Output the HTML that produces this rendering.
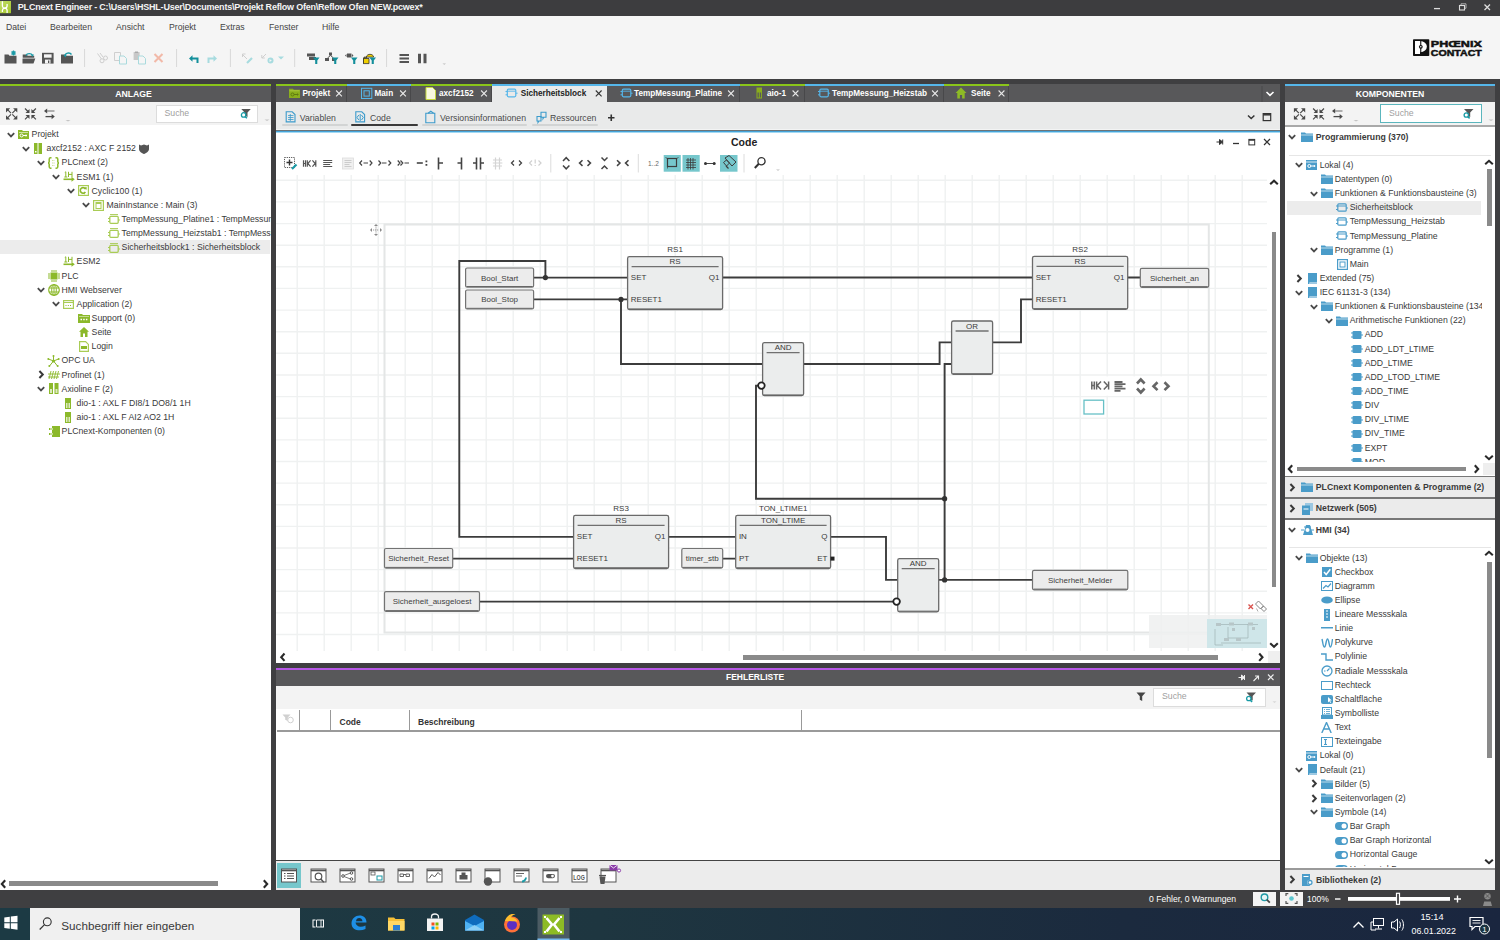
<!DOCTYPE html>
<html><head><meta charset="utf-8">
<style>
*{box-sizing:border-box}
html,body{margin:0;padding:0}
body{width:1500px;height:940px;overflow:hidden;position:relative;background:#3f3f41;font-family:"Liberation Sans",sans-serif;color:#333}
.a{position:absolute}
.t{position:absolute;white-space:nowrap;line-height:1}
#title{left:0;top:0;width:1500px;height:16px;background:#3d3d3f}
#menu{left:0;top:16px;width:1500px;height:22px;background:#f5f5f5}
#tb{left:0;top:38px;width:1500px;height:41px;background:#f5f5f5}
#lp{left:0;top:84px;width:271px;height:806px;background:#fff}
#rp{left:1285px;top:84px;width:210px;height:806px;background:#fff}
#mid{left:276px;top:84px;width:1004px;height:806px;background:#fff}
.ph{position:absolute;left:0;top:0;width:100%;height:18px;background:#58585a;border-top:2px solid #8ac51a}
.ph span{position:absolute;left:0;right:0;top:3.5px;text-align:center;color:#fff;font-weight:bold;font-size:8.7px;line-height:1}
.ptb{position:absolute;left:0;top:18px;width:100%;height:23px;background:#f3f3f3}
.search{position:absolute;background:#fff;border:1px solid #dcdcdc}
.search span{position:absolute;left:8px;top:3.3px;font-size:8.7px;color:#a0a0a0;line-height:1;white-space:nowrap}
.tab{position:absolute;top:84px;height:18px;background:#58585a;border-top:2px solid #8ac51a;border-right:1px solid #4b4b4d}
.tab span{position:absolute;top:3px;font-size:8.3px;font-weight:bold;color:#fff;white-space:nowrap;line-height:1}
.tab i{position:absolute;top:2px;font-style:normal;font-size:9px;color:#fff;line-height:1}
.tab .ic{position:absolute}
.tab.act{background:#e9eaea}
.tab.act span{color:#222}
.tab.act i{color:#333}
.sub{position:absolute;top:105px;height:21px;border-bottom:2px solid #d4d6d6}
.sub.on{border-bottom-color:#333}
.sub span{position:absolute;top:7px;font-size:8.7px;color:#333;white-space:nowrap;line-height:1}
.tree .t{font-size:8.7px;color:#333}

</style></head><body>

<!-- TITLE BAR -->
<div id="title" class="a">
  
  <div class="t" style="left:17.8px;top:3px;font-size:9px;font-weight:bold;color:#f4f4f4;letter-spacing:-0.21px">PLCnext Engineer - C:\Users\HSHL-User\Documents\Projekt Reflow Ofen\Reflow Ofen NEW.pcwex*</div>
</div>

<!-- MENU -->
<div id="menu" class="a">
  <div class="t" style="left:6px;top:7px;font-size:8.7px;color:#444">Datei</div>
  <div class="t" style="left:50px;top:7px;font-size:8.7px;color:#444">Bearbeiten</div>
  <div class="t" style="left:116px;top:7px;font-size:8.7px;color:#444">Ansicht</div>
  <div class="t" style="left:169px;top:7px;font-size:8.7px;color:#444">Projekt</div>
  <div class="t" style="left:220px;top:7px;font-size:8.7px;color:#444">Extras</div>
  <div class="t" style="left:269px;top:7px;font-size:8.7px;color:#444">Fenster</div>
  <div class="t" style="left:322px;top:7px;font-size:8.7px;color:#444">Hilfe</div>
</div>
<div class="a" style="left:0;top:38px;width:448px;height:1px;background:#e2e2e2"></div>

<!-- TOOLBAR -->
<div id="tb" class="a"></div>
<!-- window controls -->
<svg class="a" style="left:1425px;top:0" width="75" height="16" viewBox="1425 0 75 16">
  <path d="M1434 8.6h6" stroke="#ddd" stroke-width="1.3"/>
  <rect x="1459.5" y="5.5" width="5" height="4.5" fill="none" stroke="#ddd" stroke-width="1.1"/>
  <path d="M1461 5V3.8h5v4.5h-1.3" fill="none" stroke="#bbb" stroke-width="0.9"/>
  <path d="M1484.5 4.5l5.5 5.5M1490 4.5l-5.5 5.5" stroke="#ddd" stroke-width="1.3"/>
</svg>
<!-- title logo -->
<svg class="a" style="left:0;top:0" width="12" height="16" viewBox="0 0 12 16">
  <defs><linearGradient id="lg1" x1="0" y1="0" x2="1" y2="1"><stop offset="0" stop-color="#c2dc6a"/><stop offset="1" stop-color="#a3c62a"/></linearGradient></defs>
  <rect x="0" y="1" width="11" height="12.2" fill="url(#lg1)"/>
  <path d="M2.4 1.2V6.2Q2.6 8 4.7 8.1Q7 8 7.1 6V4" stroke="#fff" stroke-width="1.3" fill="none"/>
  <path d="M2.4 12V10.2Q2.6 8.3 4.7 8.1Q7 8.2 7.1 10.3V13" stroke="#fff" stroke-width="1.3" fill="none"/>
</svg>
<!-- phoenix logo -->
<svg class="a" style="left:1410px;top:36px" width="80" height="24" viewBox="1410 36 80 24">
  <rect x="1413" y="39.3" width="16.3" height="16.7" rx="0.8" fill="#111"/>
  <path d="M1415 41h5.3a6.6 5.6 0 0 1 0 11.2h-0.3v1.8h-5z" fill="#fff"/>
  <rect x="1420.2" y="41" width="1.1" height="13" fill="#111"/>
  <circle cx="1420.8" cy="46.8" r="1.9" fill="#111"/><circle cx="1420.8" cy="46.8" r="0.8" fill="#fff"/>
  <text x="1430.8" y="46.6" font-family="Liberation Sans" font-weight="bold" font-size="9.6" fill="#111" stroke="#111" stroke-width="0.5" textLength="51" lengthAdjust="spacingAndGlyphs">PH&#x152;NIX</text>
  <text x="1430.8" y="56" font-family="Liberation Sans" font-weight="bold" font-size="9.6" fill="#111" stroke="#111" stroke-width="0.5" textLength="51" lengthAdjust="spacingAndGlyphs">CONTACT</text>
</svg>
<!-- main toolbar icons -->
<svg class="a" style="left:0;top:38px" width="460" height="41" viewBox="0 38 460 41">
  <g fill="#555">
    <path d="M4.5 54.5h4l1 1.3h7V63.6h-12z"/>
    <path d="M22.7 54.5h4l1 1.3h6.5v2h-11.5zM22.5 58.5h12.8l-1.8 5.1H22.5z"/>
    <path d="M42 52.8h11.6v10.8H42z"/>
    <path d="M61 54.5h4l1 1.3h7V63.6h-12z"/>
  </g>
  <path d="M44 54.3h7.6v3.4H44z" fill="#f5f5f5"/><path d="M45 59.6h5.5v4h-5.5z" fill="#f5f5f5"/><rect x="48" y="60.5" width="1.3" height="2.5" fill="#555"/>
  <path d="M13.5 50.5v5M11 53h5M11.7 51.2l3.6 3.6M15.3 51.2l-3.6 3.6" stroke="#1a9aa6" stroke-width="1.1"/>
  <path d="M26 55.5a3.5 3 0 0 1 6.5 0" stroke="#1a9aa6" stroke-width="1.4" fill="none"/><path d="M31 54.5h3l-1.5 2.2z" fill="#1a9aa6"/>
  <path d="M65 56a3.5 3 0 0 1 6.5-1.5" stroke="#1a9aa6" stroke-width="1.4" fill="none"/><path d="M63.5 55h3l-1 2.5z" fill="#1a9aa6"/>
  <path d="M84.6 49v18M176.6 49v18M230.4 49v18M294.7 49v18M386.6 49v18" stroke="#d8d8d8" stroke-width="1"/>
  <g stroke="#cfcfcf" stroke-width="1" fill="none">
    <circle cx="102" cy="60.8" r="2"/><circle cx="105.5" cy="58" r="2"/><path d="M97.5 53.5l4 5.5M100 53l3 4"/>
  </g>
  <path d="M114.5 52.5h6v8h-6z" fill="none" stroke="#cfcfcf" stroke-width="1"/>
  <path d="M119.5 56h4.5l2.5 2.5v5.5h-7z" fill="#f5f5f5" stroke="#a9dadd" stroke-width="1"/>
  <path d="M133.6 52h6v8h-6z" fill="#c8c8c8"/><path d="M135 51.5h3v1.5h-3z" fill="#aaa"/>
  <path d="M138.5 56h4.5l2.5 2.5v5.5h-7z" fill="#f5f5f5" stroke="#a9dadd" stroke-width="1"/>
  <path d="M154.5 54l8 8M162.5 54l-8 8" stroke="#f2b9a8" stroke-width="2"/>
  <path d="M197.5 63V58.5H191.5" stroke="#138f9b" stroke-width="2" fill="none"/><path d="M189 58.5l3.5-3.3v6.6z" fill="#138f9b"/>
  <path d="M208.5 63V58.5H214.5" stroke="#a7dbdf" stroke-width="2" fill="none"/><path d="M217 58.5l-3.5-3.3v6.6z" fill="#a7dbdf"/>
  <path d="M242 54l5 5M242.5 57v-3h3" stroke="#cfcfcf" stroke-width="1" fill="none"/><path d="M247 63l5-5" stroke="#a7dbdf" stroke-width="2.2"/>
  <path d="M266 54l-4 4M261.8 55v3h3" stroke="#cfcfcf" stroke-width="1" fill="none"/><circle cx="270.5" cy="60.5" r="3" fill="#a7dbdf"/><path d="M269.5 59v3l2.3-1.5z" fill="#f5f5f5"/>
  <path d="M278 56.5h6l-3 3z" fill="#a7dbdf"/>
  <g fill="#555">
    <path d="M307 53.5h8v3h-8zM309 57h7v3h-7z"/>
    <path d="M329 52.5h3v3h-3zM325 58h4v3h-4zM332 58h3v3h-3z"/><path d="M330.5 55.5l-3 2.5M330.5 55.5l3 2.5" stroke="#555" stroke-width="1"/>
    <path d="M347 53.5h4.5v4h-4.5z"/><path d="M345 55.5l1.5-1.5v3zM353.5 55.5l-1.5-1.5v3z"/>
  </g>
  <path d="M313 57.5h6.5l-2.2 3v3.5h-2.1v-3.5z" fill="#138f9b"/>
  <path d="M332 57.5h6.5l-2.2 3v3.5h-2.1v-3.5z" fill="#138f9b"/>
  <path d="M351 57.5h6.5l-2.2 3v3.5h-2.1v-3.5z" fill="#138f9b"/>
  <path d="M363.5 63.6v-5.5h3v-2a4 3.5 0 0 1 7 0v1H364z" fill="#f0d000" stroke="#333" stroke-width="0.8"/><path d="M363.5 58.5h5.5v5.1h-5.5z" fill="#f0d000" stroke="#333" stroke-width="0.8"/>
  <path d="M369.5 57.5h6.5l-2.2 3v3.5h-2.1v-3.5z" fill="#138f9b"/>
  <path d="M399.5 54h9.5v2h-9.5zM399.5 57.5h9.5v2h-9.5zM399.5 61h9.5v2h-9.5z" fill="#555"/>
  <path d="M418 53.8h3v9.5h-3zM423.5 53.8h3v9.5h-3z" fill="#555"/>
  <path d="M442.5 63.5h3.5l-1.75 1.3z" fill="#bbb"/>
</svg>


<!-- LEFT PANEL -->
<div id="lp" class="a">
  <div class="ph"><span style="right:4px">ANLAGE</span></div>
  <div class="ptb">
    <div class="search" style="left:155.5px;top:2.6px;width:102px;height:18.5px"><span>Suche</span></div>
  </div>
</div>
<div class="a" style="left:0;top:126px;width:271px;height:750px;overflow:hidden">
<div class="a" style="left:0;top:114.3px;width:270px;height:14px;background:#ececec"></div>
<svg class="a" style="left:7.1px;top:5.5px;" width="8" height="6" viewBox="0 0 8 6"><path d="M0.8 1.2L4 4.4L7.2 1.2" stroke="#4a4a4a" stroke-width="1.8" fill="none"/></svg>
<svg class="a" style="left:18.0px;top:3.3px;" width="11" height="10" viewBox="0 0 11 10"><path d="M0 1h4l1 1h6v8H0z" fill="#8cb92b"/><rect x="1" y="3" width="9" height="0.8" fill="#fff" opacity=".7"/><circle cx="3.6" cy="6.5" r="1.5" fill="none" stroke="#fff" stroke-width="1"/><path d="M5 6.5h4M8 5.5v2" stroke="#fff" stroke-width="1"/></svg>
<div class="t" style="left:31.60px;top:4.16px;font-size:8.7px;color:#3a3a3a;">Projekt</div>
<svg class="a" style="left:22.1px;top:19.7px;" width="8" height="6" viewBox="0 0 8 6"><path d="M0.8 1.2L4 4.4L7.2 1.2" stroke="#4a4a4a" stroke-width="1.8" fill="none"/></svg>
<svg class="a" style="left:34.0px;top:17.0px;" width="8" height="11" viewBox="0 0 8 11"><rect x="0" y="0" width="8" height="11" fill="#8cb92b"/><rect x="3.5" y="0" width="1" height="11" fill="#fff"/><rect x="1" y="8" width="1.5" height="1.5" fill="#fff"/></svg>
<div class="t" style="left:46.60px;top:18.30px;font-size:8.7px;color:#3a3a3a;">axcf2152 : AXC F 2152</div>
<svg class="a" style="left:139.0px;top:17.5px;" width="10" height="10" viewBox="0 0 10 10"><path d="M0 0.5L2 1.5L5 0.5L8 1.5L10 0.5V5C10 7.5 7 9.5 5 10C3 9.5 0 7.5 0 5z" fill="#555"/></svg>
<svg class="a" style="left:37.1px;top:33.8px;" width="8" height="6" viewBox="0 0 8 6"><path d="M0.8 1.2L4 4.4L7.2 1.2" stroke="#4a4a4a" stroke-width="1.8" fill="none"/></svg>
<svg class="a" style="left:48.0px;top:31.1px;" width="11" height="12" viewBox="0 0 11 12"><path d="M3.5 0.8H2.5Q1.2 0.8 1.2 2.2V4.8L0.4 6L1.2 7.2V9.8Q1.2 11.2 2.5 11.2H3.5M7.5 0.8H8.5Q9.8 0.8 9.8 2.2V4.8L10.6 6L9.8 7.2V9.8Q9.8 11.2 8.5 11.2H7.5" stroke="#8cb92b" stroke-width="1.5" fill="none"/><path d="M4.3 3.5h2M4.3 6h2.4M4.3 8.5h2" stroke="#a9cc55" stroke-width="0.8" stroke-dasharray="0.8 0.6"/></svg>
<div class="t" style="left:61.60px;top:32.44px;font-size:8.7px;color:#3a3a3a;">PLCnext (2)</div>
<svg class="a" style="left:52.1px;top:48.0px;" width="8" height="6" viewBox="0 0 8 6"><path d="M0.8 1.2L4 4.4L7.2 1.2" stroke="#4a4a4a" stroke-width="1.8" fill="none"/></svg>
<svg class="a" style="left:63.0px;top:45.3px;" width="12" height="12" viewBox="0 0 12 12"><path d="M1.8 1.5L2.8 0.8V6M1.3 6h3M5.5 0.8V6M9 0.8V6M5.5 3.4H9" stroke="#8cb92b" stroke-width="1" fill="none"/><path d="M0.5 8.3h9" stroke="#8cb92b" stroke-width="1.6"/><path d="M8.5 5.8L11.8 8.3L8.5 10.8z" fill="#8cb92b"/></svg>
<div class="t" style="left:76.60px;top:46.58px;font-size:8.7px;color:#3a3a3a;">ESM1 (1)</div>
<svg class="a" style="left:67.1px;top:62.1px;" width="8" height="6" viewBox="0 0 8 6"><path d="M0.8 1.2L4 4.4L7.2 1.2" stroke="#4a4a4a" stroke-width="1.8" fill="none"/></svg>
<svg class="a" style="left:78.0px;top:59.4px;" width="11" height="11" viewBox="0 0 11 11"><rect x="0.6" y="0.6" width="9.8" height="9.8" fill="none" stroke="#a9cc55" stroke-width="1.2"/><path d="M7.6 4.2A2.8 2.8 0 1 0 7.4 7" stroke="#8cb92b" stroke-width="1.6" fill="none"/><path d="M6 2.2L8.8 2.3L8.4 5z" fill="#8cb92b"/><path d="M6.8 8.8L4.8 8.3" stroke="#8cb92b" stroke-width="1"/></svg>
<div class="t" style="left:91.60px;top:60.72px;font-size:8.7px;color:#3a3a3a;">Cyclic100 (1)</div>
<svg class="a" style="left:82.1px;top:76.3px;" width="8" height="6" viewBox="0 0 8 6"><path d="M0.8 1.2L4 4.4L7.2 1.2" stroke="#4a4a4a" stroke-width="1.8" fill="none"/></svg>
<svg class="a" style="left:93.0px;top:73.6px;" width="11" height="11" viewBox="0 0 11 11"><rect x="0.6" y="0.6" width="9.8" height="9.8" fill="none" stroke="#a9cc55" stroke-width="1.2"/><rect x="3" y="2.5" width="5" height="6" fill="none" stroke="#a9cc55" stroke-width="1"/><path d="M3 3.5h5" stroke="#a9cc55" stroke-width="1"/></svg>
<div class="t" style="left:106.60px;top:74.86px;font-size:8.7px;color:#3a3a3a;">MainInstance : Main (3)</div>
<svg class="a" style="left:108.0px;top:88.2px;" width="12" height="10" viewBox="0 0 12 10"><path d="M2 0.6h8" stroke="#a9cc55" stroke-width="1"/><rect x="1.8" y="2.3" width="8.4" height="7" rx="1" fill="none" stroke="#a9cc55" stroke-width="1.3"/><path d="M0 4.5h2M0 7.5h2M10 6h2" stroke="#a9cc55" stroke-width="1"/></svg>
<div class="t" style="left:121.60px;top:89.00px;font-size:8.7px;color:#3a3a3a;">TempMessung_Platine1 : TempMessung_Platine</div>
<svg class="a" style="left:108.0px;top:102.3px;" width="12" height="10" viewBox="0 0 12 10"><path d="M2 0.6h8" stroke="#a9cc55" stroke-width="1"/><rect x="1.8" y="2.3" width="8.4" height="7" rx="1" fill="none" stroke="#a9cc55" stroke-width="1.3"/><path d="M0 4.5h2M0 7.5h2M10 6h2" stroke="#a9cc55" stroke-width="1"/></svg>
<div class="t" style="left:121.60px;top:103.14px;font-size:8.7px;color:#3a3a3a;">TempMessung_Heizstab1 : TempMessung_Heizstab</div>
<svg class="a" style="left:108.0px;top:116.5px;" width="12" height="10" viewBox="0 0 12 10"><path d="M2 0.6h8" stroke="#a9cc55" stroke-width="1"/><rect x="1.8" y="2.3" width="8.4" height="7" rx="1" fill="none" stroke="#a9cc55" stroke-width="1.3"/><path d="M0 4.5h2M0 7.5h2M10 6h2" stroke="#a9cc55" stroke-width="1"/></svg>
<div class="t" style="left:121.60px;top:117.28px;font-size:8.7px;color:#3a3a3a;">Sicherheitsblock1 : Sicherheitsblock</div>
<svg class="a" style="left:63.0px;top:130.1px;" width="12" height="12" viewBox="0 0 12 12"><path d="M1.8 1.5L2.8 0.8V6M1.3 6h3M5.5 0.8V6M9 0.8V6M5.5 3.4H9" stroke="#8cb92b" stroke-width="1" fill="none"/><path d="M0.5 8.3h9" stroke="#8cb92b" stroke-width="1.6"/><path d="M8.5 5.8L11.8 8.3L8.5 10.8z" fill="#8cb92b"/></svg>
<div class="t" style="left:76.60px;top:131.42px;font-size:8.7px;color:#3a3a3a;">ESM2</div>
<svg class="a" style="left:47.5px;top:143.8px;" width="12" height="12" viewBox="0 0 12 12"><rect x="2.5" y="2.5" width="7" height="7" fill="#8cb92b"/><path d="M4 0v2M6 0v2M8 0v2M4 10v2M6 10v2M8 10v2M0 4h2M0 6h2M0 8h2M10 4h2M10 6h2M10 8h2" stroke="#8cb92b" stroke-width="1"/></svg>
<div class="t" style="left:61.60px;top:145.56px;font-size:8.7px;color:#3a3a3a;">PLC</div>
<svg class="a" style="left:37.1px;top:161.1px;" width="8" height="6" viewBox="0 0 8 6"><path d="M0.8 1.2L4 4.4L7.2 1.2" stroke="#4a4a4a" stroke-width="1.8" fill="none"/></svg>
<svg class="a" style="left:47.5px;top:157.9px;" width="12" height="12" viewBox="0 0 12 12"><circle cx="6" cy="6" r="5.3" fill="none" stroke="#8cb92b" stroke-width="1.2"/><ellipse cx="6" cy="6" rx="2.3" ry="5.3" fill="none" stroke="#8cb92b" stroke-width="1"/><path d="M0.8 4h10.4M0.8 8h10.4M6 0.7v10.6" stroke="#8cb92b" stroke-width="1"/></svg>
<div class="t" style="left:61.60px;top:159.70px;font-size:8.7px;color:#3a3a3a;">HMI Webserver</div>
<svg class="a" style="left:52.1px;top:175.2px;" width="8" height="6" viewBox="0 0 8 6"><path d="M0.8 1.2L4 4.4L7.2 1.2" stroke="#4a4a4a" stroke-width="1.8" fill="none"/></svg>
<svg class="a" style="left:63.0px;top:173.5px;" width="11" height="9" viewBox="0 0 11 9"><rect x="0.6" y="0.6" width="9.8" height="7.8" fill="none" stroke="#a9cc55" stroke-width="1.2"/><path d="M0.6 2.5h9.8" stroke="#a9cc55" stroke-width="1"/><path d="M2.5 5.5h1M4.8 5.5h1M7 5.5h1" stroke="#8cb92b" stroke-width="1.2"/></svg>
<div class="t" style="left:76.60px;top:173.84px;font-size:8.7px;color:#3a3a3a;">Application (2)</div>
<svg class="a" style="left:78.0px;top:187.7px;" width="12" height="9" viewBox="0 0 12 9"><path d="M0 0h4l1 1h7v8H0z" fill="#8cb92b"/><rect x="1" y="2" width="10" height="0.8" fill="#fff" opacity=".6"/><path d="M2.5 5.5h1.5M5.2 5.5h1.5M7.9 5.5h1.5" stroke="#fff" stroke-width="1.3"/></svg>
<div class="t" style="left:91.60px;top:187.98px;font-size:8.7px;color:#3a3a3a;">Support (0)</div>
<svg class="a" style="left:78.5px;top:201.3px;" width="10" height="10" viewBox="0 0 10 10"><path d="M5 0L0 4.8h1.5V10h2.5V6.5h2V10h2.5V4.8H10z" fill="#8cb92b"/></svg>
<div class="t" style="left:91.60px;top:202.12px;font-size:8.7px;color:#3a3a3a;">Seite</div>
<svg class="a" style="left:78.5px;top:215.0px;" width="10" height="11" viewBox="0 0 10 11"><path d="M0.6 0.6h6l2.8 2.8v7H0.6z" fill="none" stroke="#a9cc55" stroke-width="1.2"/><rect x="2" y="5" width="6" height="3" fill="#8cb92b"/></svg>
<div class="t" style="left:91.60px;top:216.26px;font-size:8.7px;color:#3a3a3a;">Login</div>
<svg class="a" style="left:47.0px;top:228.6px;" width="13" height="12" viewBox="0 0 13 12"><path d="M6.5 6L6.5 1M6.5 6L1.5 4M6.5 6L11.5 4M6.5 6L2.5 11M6.5 6L10.5 11" stroke="#8cb92b" stroke-width="1"/><circle cx="6.5" cy="6" r="1.6" fill="#8cb92b"/><circle cx="6.5" cy="1" r="1" fill="#8cb92b"/><circle cx="1.3" cy="4" r="1" fill="#8cb92b"/><circle cx="11.7" cy="4" r="1" fill="#8cb92b"/><circle cx="2.3" cy="11" r="1" fill="#8cb92b"/><circle cx="10.7" cy="11" r="1" fill="#8cb92b"/></svg>
<div class="t" style="left:61.60px;top:230.40px;font-size:8.7px;color:#3a3a3a;">OPC UA</div>
<svg class="a" style="left:38.1px;top:244.2px;" width="7" height="9" viewBox="0 0 7 9"><path d="M1.4 1L4.8 4.5L1.4 8" stroke="#3a3a3a" stroke-width="2" fill="none"/></svg>
<svg class="a" style="left:48.0px;top:243.7px;" width="12" height="10" viewBox="0 0 12 10"><path d="M1 9L3 1M3.5 9L5.5 1M6 9L8 1M8.5 9L10.5 1M0 4h12M0 7h11" stroke="#8cb92b" stroke-width="0.9"/></svg>
<div class="t" style="left:61.60px;top:244.54px;font-size:8.7px;color:#3a3a3a;">Profinet (1)</div>
<svg class="a" style="left:37.1px;top:260.1px;" width="8" height="6" viewBox="0 0 8 6"><path d="M0.8 1.2L4 4.4L7.2 1.2" stroke="#4a4a4a" stroke-width="1.8" fill="none"/></svg>
<svg class="a" style="left:48.5px;top:257.4px;" width="10" height="11" viewBox="0 0 10 11"><rect x="0" y="0" width="4" height="11" fill="#8cb92b"/><rect x="5.5" y="0" width="4" height="11" fill="#8cb92b"/><path d="M1 6h2v4H1zM6.5 6h2v4h-2z" fill="#fff" opacity=".7"/></svg>
<div class="t" style="left:61.60px;top:258.68px;font-size:8.7px;color:#3a3a3a;">Axioline F (2)</div>
<svg class="a" style="left:65.0px;top:271.5px;" width="6" height="11" viewBox="0 0 6 11"><rect x="0" y="0" width="6" height="11" fill="#8cb92b"/><path d="M1 5h1.5v5H1zM3.5 5H5v5H3.5z" fill="#fff" opacity=".7"/></svg>
<div class="t" style="left:76.60px;top:272.82px;font-size:8.7px;color:#3a3a3a;">dio-1 : AXL F DI8/1 DO8/1 1H</div>
<svg class="a" style="left:65.0px;top:285.6px;" width="6" height="11" viewBox="0 0 6 11"><rect x="0" y="0" width="6" height="11" fill="#8cb92b"/><path d="M1 5h1.5v5H1zM3.5 5H5v5H3.5z" fill="#fff" opacity=".7"/></svg>
<div class="t" style="left:76.60px;top:286.96px;font-size:8.7px;color:#3a3a3a;">aio-1 : AXL F AI2 AO2 1H</div>
<svg class="a" style="left:48.5px;top:299.8px;" width="11" height="11" viewBox="0 0 11 11"><path d="M3 0h8v11H3z" fill="#8cb92b"/><path d="M0 2h4v2H0zM0 7h4v2H0z" fill="#8cb92b"/><path d="M1 2.5h3v1H1zM1 7.5h3v1H1z" fill="#fff"/></svg>
<div class="t" style="left:61.60px;top:301.10px;font-size:8.7px;color:#3a3a3a;">PLCnext-Komponenten (0)</div>
</div>
<div class="a" style="left:9px;top:881px;width:209px;height:4.5px;background:#8a8a8a"></div>
<svg class="a" style="left:0.0px;top:878.5px;" width="7" height="10" viewBox="0 0 7 10"><path d="M5.2 1.2L1.8 5L5.2 8.8" stroke="#2a2a2a" stroke-width="2.1" fill="none"/></svg><svg class="a" style="left:261.5px;top:878.5px;" width="7" height="10" viewBox="0 0 7 10"><path d="M1.8 1.2L5.2 5L1.8 8.8" stroke="#2a2a2a" stroke-width="2.1" fill="none"/></svg>

<!-- MIDDLE -->
<div id="mid" class="a">
  <!-- tab bar -->
  <div class="a" style="left:0;top:0;width:1004px;height:18px;background:#58585a"></div>
</div>
<div class="a" style="left:276px;top:84px;width:71px;height:18px;background:#58585a;border-top:2px solid #8ac51a"></div>
<div class="t" style="left:302.40px;top:89.55px;font-size:8.2px;color:#fff;font-weight:bold;">Projekt</div>
<div class="a" style="left:347px;top:84px;width:64px;height:18px;background:#58585a;border-top:2px solid #55b6ea"></div>
<div class="t" style="left:374.50px;top:89.55px;font-size:8.2px;color:#fff;font-weight:bold;">Main</div>
<div class="a" style="left:411px;top:84px;width:81px;height:18px;background:#58585a;border-top:2px solid #8ac51a"></div>
<div class="t" style="left:439.00px;top:89.55px;font-size:8.2px;color:#fff;font-weight:bold;">axcf2152</div>
<div class="a" style="left:492px;top:84px;width:115px;height:18px;background:#e9eaea;border-top:2px solid #55b6ea"></div>
<div class="t" style="left:520.70px;top:89.55px;font-size:8.2px;color:#222;font-weight:bold;">Sicherheitsblock</div>
<div class="a" style="left:607px;top:84px;width:133px;height:18px;background:#58585a;border-top:2px solid #55b6ea"></div>
<div class="t" style="left:634.00px;top:89.55px;font-size:8.2px;color:#fff;font-weight:bold;">TempMessung_Platine</div>
<div class="a" style="left:740px;top:84px;width:65px;height:18px;background:#58585a;border-top:2px solid #8ac51a"></div>
<div class="t" style="left:767.00px;top:89.55px;font-size:8.2px;color:#fff;font-weight:bold;">aio-1</div>
<div class="a" style="left:805px;top:84px;width:139px;height:18px;background:#58585a;border-top:2px solid #55b6ea"></div>
<div class="t" style="left:832.00px;top:89.55px;font-size:8.2px;color:#fff;font-weight:bold;">TempMessung_Heizstab</div>
<div class="a" style="left:944px;top:84px;width:65px;height:18px;background:#58585a;border-top:2px solid #8ac51a"></div>
<div class="t" style="left:971.00px;top:89.55px;font-size:8.2px;color:#fff;font-weight:bold;">Seite</div>
<svg class="a" style="left:276px;top:84px" width="1004" height="20" viewBox="276 84 1004 20"><path d="M346.5 86V102" stroke="#48484a" stroke-width="1"/><path d="M336.1 90.5L341.9 96.3M341.9 90.5L336.1 96.3" stroke="#e8e8e8" stroke-width="1.1"/><path d="M289 88.8h4l0.8 1h6.2v8.1H289z" fill="#8aae1c"/><path d="M289.5 90.8h10" stroke="#b8d050" stroke-width="0.7"/><circle cx="292.5" cy="94.5" r="1.5" fill="none" stroke="#5f7a10" stroke-width="1"/><path d="M294 94.5h4.5M297.5 93.5v2" stroke="#5f7a10" stroke-width="1"/><path d="M410.5 86V102" stroke="#48484a" stroke-width="1"/><path d="M400.1 90.5L405.9 96.3M405.9 90.5L400.1 96.3" stroke="#e8e8e8" stroke-width="1.1"/><rect x="361.5" y="88.3" width="10.3" height="10.2" fill="none" stroke="#55b6ea" stroke-width="1"/><rect x="364" y="90.8" width="5.3" height="5.3" fill="none" stroke="#55b6ea" stroke-width="1"/><path d="M491.5 86V102" stroke="#48484a" stroke-width="1"/><path d="M481.1 90.5L486.9 96.3M486.9 90.5L481.1 96.3" stroke="#e8e8e8" stroke-width="1.1"/><path d="M426 87.5h6.5l3 3v9H426z" fill="#f6f8e0" stroke="#c5d940" stroke-width="1"/><path d="M595.8 90.5L601.6 96.3M601.6 90.5L595.8 96.3" stroke="#333" stroke-width="1.1"/><rect x="507.3" y="89.2" width="8.5" height="7.6" rx="1.2" fill="none" stroke="#55b6ea" stroke-width="1.2"/><path d="M507.5 91.2h8.2" stroke="#55b6ea" stroke-width="0.9"/><path d="M505.5 91.5h1.8M505.5 94.8h1.8M515.8 93.2h1.8" stroke="#55b6ea" stroke-width="1"/><path d="M739.5 86V102" stroke="#48484a" stroke-width="1"/><path d="M728.1 90.5L733.9 96.3M733.9 90.5L728.1 96.3" stroke="#e8e8e8" stroke-width="1.1"/><rect x="622.3" y="89.2" width="8.5" height="7.6" rx="1.2" fill="none" stroke="#55b6ea" stroke-width="1.2"/><path d="M622.5 91.2h8.2" stroke="#55b6ea" stroke-width="0.9"/><path d="M620.5 91.5h1.8M620.5 94.8h1.8M630.8 93.2h1.8" stroke="#55b6ea" stroke-width="1"/><path d="M804.5 86V102" stroke="#48484a" stroke-width="1"/><path d="M792.6 90.5L798.4 96.3M798.4 90.5L792.6 96.3" stroke="#e8e8e8" stroke-width="1.1"/><rect x="756.5" y="87.5" width="5.5" height="11" fill="#8aae1c"/><path d="M757.5 92.5h1.3v5h-1.3zM759.8 92.5h1.3v5h-1.3z" fill="#58585a"/><path d="M943.5 86V102" stroke="#48484a" stroke-width="1"/><path d="M932.1 90.5L937.9 96.3M937.9 90.5L932.1 96.3" stroke="#e8e8e8" stroke-width="1.1"/><rect x="819.8" y="89.2" width="8.5" height="7.6" rx="1.2" fill="none" stroke="#55b6ea" stroke-width="1.2"/><path d="M820 91.2h8.2" stroke="#55b6ea" stroke-width="0.9"/><path d="M818 91.5h1.8M818 94.8h1.8M828.3 93.2h1.8" stroke="#55b6ea" stroke-width="1"/><path d="M1008.5 86V102" stroke="#48484a" stroke-width="1"/><path d="M998.6 90.5L1004.4 96.3M1004.4 90.5L998.6 96.3" stroke="#e8e8e8" stroke-width="1.1"/><path d="M961 87.5L955.5 93h1.8v5.5h2.6v-3.5h2.2v3.5h2.6V93h1.8z" fill="#8dbb25"/><path d="M1262 86v16" stroke="#48484a"/><path d="M1266.5 92l3.5 3.3 3.5-3.3" stroke="#fff" stroke-width="1.6" fill="none"/></svg>
<div class="a" style="left:276px;top:102px;width:1004px;height:28px;background:#e9eaea"></div>
<div class="a" style="left:276px;top:129px;width:1004px;height:1px;background:#f3f4f4"></div>
<div class="a" style="left:276px;top:130px;width:1004px;height:1px;background:#6b7478"></div>
<div class="a" style="left:276px;top:131px;width:1004px;height:1px;background:#45a3d8"></div>
<div class="a" style="left:276px;top:132px;width:1004px;height:1px;background:#a3d9f3"></div>
<div class="a" style="left:281.7px;top:124.3px;width:66.0px;height:2px;background:#d2d4d4;border-radius:1px"></div>
<div class="t" style="left:299.80px;top:113.61px;font-size:8.7px;color:#4a4a4a;">Variablen</div>
<div class="a" style="left:351.4px;top:124.3px;width:66.6px;height:2px;background:#3a3a3a;border-radius:1px"></div>
<div class="t" style="left:370.00px;top:113.61px;font-size:8.7px;color:#4a4a4a;">Code</div>
<div class="a" style="left:421.6px;top:124.3px;width:105.9px;height:2px;background:#d2d4d4;border-radius:1px"></div>
<div class="t" style="left:440.00px;top:113.61px;font-size:8.7px;color:#4a4a4a;">Versionsinformationen</div>
<div class="a" style="left:531.6px;top:124.3px;width:66.8px;height:2px;background:#d2d4d4;border-radius:1px"></div>
<div class="t" style="left:550.00px;top:113.61px;font-size:8.7px;color:#4a4a4a;">Ressourcen</div>
<!-- code header -->
<div class="t" style="left:731px;top:137px;font-size:10.5px;font-weight:bold;color:#222">Code</div>

<svg class="a" style="left:0;top:0" width="1500" height="940" viewBox="0 0 1500 940" font-family="Liberation Sans"><path d="M297.2 175V651M324.2 175V651M351.2 175V651M378.2 175V651M405.2 175V651M432.2 175V651M459.2 175V651M486.2 175V651M513.2 175V651M540.2 175V651M567.2 175V651M594.2 175V651M621.2 175V651M648.2 175V651M675.2 175V651M702.2 175V651M729.2 175V651M756.2 175V651M783.2 175V651M810.2 175V651M837.2 175V651M864.2 175V651M891.2 175V651M918.2 175V651M945.2 175V651M972.2 175V651M999.2 175V651M1026.2 175V651M1053.2 175V651M1080.2 175V651M1107.2 175V651M1134.2 175V651M1161.2 175V651M1188.2 175V651M1215.2 175V651M1242.2 175V651M276 180.3H1267M276 201.9H1267M276 223.6H1267M276 245.2H1267M276 266.8H1267M276 288.4H1267M276 310.1H1267M276 331.7H1267M276 353.3H1267M276 375.0H1267M276 396.6H1267M276 418.2H1267M276 439.9H1267M276 461.5H1267M276 483.1H1267M276 504.7H1267M276 526.4H1267M276 548.0H1267M276 569.6H1267M276 591.3H1267M276 612.9H1267M276 634.5H1267" stroke="#eff1f1" stroke-width="1.4" fill="none"/><rect x="384.5" y="224.5" width="824.3" height="408" fill="none" stroke="#e4e6e6" stroke-width="2"/><path d="M534 277.6H628M545.4 277.6V261H459.3V536.9H574M534 299.4H628M621 299.4V364H763M722.6 277.5H1032.5M758 385.6H756V498.7H945M803.6 364H939.6V342.4H951.6M951.6 364H944.6V579.9M992.6 342.4H1021V299.4H1032.5M1127.7 277.5H1140.3M452.7 558.6H573.6M668.6 536.9H735.7M722.7 558.6H735.7M830.6 536.9H886V579.9H897.7M938.7 579.9H1032.5M479.5 601.6H893" stroke="#3c3c3c" stroke-width="1.9" fill="none"/><circle cx="545.4" cy="277.6" r="2.6" fill="#333"/><circle cx="621" cy="299.4" r="2.6" fill="#333"/><circle cx="944.6" cy="498.7" r="2.6" fill="#333"/><circle cx="944.6" cy="579.9" r="2.6" fill="#333"/><rect x="627.6" y="256.6" width="95.0" height="53.0" rx="1.8" fill="#ebeded" stroke="#6a6a6a" stroke-width="1.3"/><path d="M628.6 308.8H721.6" stroke="#5a5a5a" stroke-width="0.8"/><text x="675.1" y="264.42" font-size="8" text-anchor="middle" fill="#3a3a3a">RS</text><path d="M631.6 266.6H718.6" stroke="#707070" stroke-width="1.3"/><text x="675.1" y="252.02" font-size="8" text-anchor="middle" fill="#3a3a3a">RS1</text><text x="630.8" y="279.92" font-size="8" text-anchor="start" fill="#3a3a3a">SET</text><text x="630.8" y="301.92" font-size="8" text-anchor="start" fill="#3a3a3a">RESET1</text><text x="719.4" y="279.92" font-size="8" text-anchor="end" fill="#3a3a3a">Q1</text><rect x="1032.5" y="256.3" width="95.2" height="53.0" rx="1.8" fill="#ebeded" stroke="#6a6a6a" stroke-width="1.3"/><path d="M1033.5 308.5H1126.7" stroke="#5a5a5a" stroke-width="0.8"/><text x="1080.1" y="264.12" font-size="8" text-anchor="middle" fill="#3a3a3a">RS</text><path d="M1036.5 266.3H1123.7" stroke="#707070" stroke-width="1.3"/><text x="1080.1" y="251.72" font-size="8" text-anchor="middle" fill="#3a3a3a">RS2</text><text x="1035.7" y="279.92" font-size="8" text-anchor="start" fill="#3a3a3a">SET</text><text x="1035.7" y="301.92" font-size="8" text-anchor="start" fill="#3a3a3a">RESET1</text><text x="1124.5" y="279.92" font-size="8" text-anchor="end" fill="#3a3a3a">Q1</text><rect x="573.6" y="515.4" width="95.0" height="53.1" rx="1.8" fill="#ebeded" stroke="#6a6a6a" stroke-width="1.3"/><path d="M574.6 567.7H667.6" stroke="#5a5a5a" stroke-width="0.8"/><text x="621.1" y="523.22" font-size="8" text-anchor="middle" fill="#3a3a3a">RS</text><path d="M577.6 525.4H664.6" stroke="#707070" stroke-width="1.3"/><text x="621.1" y="510.82" font-size="8" text-anchor="middle" fill="#3a3a3a">RS3</text><text x="576.8" y="539.22" font-size="8" text-anchor="start" fill="#3a3a3a">SET</text><text x="576.8" y="560.92" font-size="8" text-anchor="start" fill="#3a3a3a">RESET1</text><text x="665.4" y="539.22" font-size="8" text-anchor="end" fill="#3a3a3a">Q1</text><rect x="735.7" y="515.4" width="94.9" height="53.1" rx="1.8" fill="#ebeded" stroke="#6a6a6a" stroke-width="1.3"/><path d="M736.7 567.7H829.6" stroke="#5a5a5a" stroke-width="0.8"/><text x="783.2" y="523.22" font-size="8" text-anchor="middle" fill="#3a3a3a">TON_LTIME</text><path d="M739.7 525.4H826.6" stroke="#707070" stroke-width="1.3"/><text x="783.2" y="510.82" font-size="8" text-anchor="middle" fill="#3a3a3a">TON_LTIME1</text><text x="738.9" y="539.22" font-size="8" text-anchor="start" fill="#3a3a3a">IN</text><text x="738.9" y="560.92" font-size="8" text-anchor="start" fill="#3a3a3a">PT</text><text x="827.4" y="539.22" font-size="8" text-anchor="end" fill="#3a3a3a">Q</text><text x="827.4" y="560.92" font-size="8" text-anchor="end" fill="#3a3a3a">ET</text><rect x="762.6" y="342.6" width="41.0" height="53.0" rx="1.8" fill="#ebeded" stroke="#6a6a6a" stroke-width="1.3"/><path d="M763.6 394.8H802.6" stroke="#5a5a5a" stroke-width="0.8"/><text x="783.1" y="350.42" font-size="8" text-anchor="middle" fill="#3a3a3a">AND</text><path d="M766.6 352.6H799.6" stroke="#707070" stroke-width="1.3"/><rect x="951.6" y="321.0" width="41.0" height="53.4" rx="1.8" fill="#ebeded" stroke="#6a6a6a" stroke-width="1.3"/><path d="M952.6 373.6H991.6" stroke="#5a5a5a" stroke-width="0.8"/><text x="972.1" y="328.82" font-size="8" text-anchor="middle" fill="#3a3a3a">OR</text><path d="M955.6 331.0H988.6" stroke="#707070" stroke-width="1.3"/><rect x="897.7" y="558.6" width="41.0" height="53.3" rx="1.8" fill="#ebeded" stroke="#6a6a6a" stroke-width="1.3"/><path d="M898.7 611.1H937.7" stroke="#5a5a5a" stroke-width="0.8"/><text x="918.2" y="566.42" font-size="8" text-anchor="middle" fill="#3a3a3a">AND</text><path d="M901.7 568.6H934.7" stroke="#707070" stroke-width="1.3"/><rect x="830.5" y="556.6" width="4" height="4" fill="#222"/><circle cx="761.4" cy="385.6" r="3.3" fill="#fff" stroke="#222" stroke-width="1.8"/><circle cx="896.6" cy="601.6" r="3.3" fill="#fff" stroke="#222" stroke-width="1.8"/><rect x="465.6" y="268.0" width="68.0" height="19.2" rx="1.5" fill="#ececec" stroke="#737373" stroke-width="1.2"/><path d="M466.6 286.5H532.6" stroke="#5f5f5f" stroke-width="0.9"/><text x="499.6" y="280.52" font-size="8" text-anchor="middle" fill="#3f3f3f">Bool_Start</text><rect x="465.6" y="290.0" width="68.0" height="19.0" rx="1.5" fill="#ececec" stroke="#737373" stroke-width="1.2"/><path d="M466.6 308.3H532.6" stroke="#5f5f5f" stroke-width="0.9"/><text x="499.6" y="302.42" font-size="8" text-anchor="middle" fill="#3f3f3f">Bool_Stop</text><rect x="1140.3" y="268.4" width="68.4" height="18.9" rx="1.5" fill="#ececec" stroke="#737373" stroke-width="1.2"/><path d="M1141.3 286.6H1207.7" stroke="#5f5f5f" stroke-width="0.9"/><text x="1174.5" y="280.77" font-size="8" text-anchor="middle" fill="#3f3f3f">Sicherheit_an</text><rect x="384.5" y="548.5" width="68.2" height="19.6" rx="1.5" fill="#ececec" stroke="#737373" stroke-width="1.2"/><path d="M385.5 567.4H451.7" stroke="#5f5f5f" stroke-width="0.9"/><text x="418.6" y="561.22" font-size="8" text-anchor="middle" fill="#3f3f3f">Sicherheit_Reset</text><rect x="384.5" y="591.7" width="95.0" height="19.6" rx="1.5" fill="#ececec" stroke="#737373" stroke-width="1.2"/><path d="M385.5 610.6H478.5" stroke="#5f5f5f" stroke-width="0.9"/><text x="432.0" y="604.42" font-size="8" text-anchor="middle" fill="#3f3f3f">Sicherheit_ausgeloest</text><rect x="681.8" y="548.5" width="40.9" height="19.6" rx="1.5" fill="#ececec" stroke="#737373" stroke-width="1.2"/><path d="M682.8 567.4H721.7" stroke="#5f5f5f" stroke-width="0.9"/><text x="702.2" y="561.22" font-size="8" text-anchor="middle" fill="#3f3f3f">timer_stb</text><rect x="1032.5" y="570.3" width="95.3" height="19.5" rx="1.5" fill="#ececec" stroke="#737373" stroke-width="1.2"/><path d="M1033.5 589.1H1126.8" stroke="#5f5f5f" stroke-width="0.9"/><text x="1080.2" y="582.97" font-size="8" text-anchor="middle" fill="#3f3f3f">Sicherheit_Melder</text></svg>

<!-- fehlerliste -->
<div class="a" style="left:276px;top:663px;width:1004px;height:5px;background:#3f3f41"></div>
<div class="a" style="left:276px;top:668px;width:1004px;height:2px;background:#b657e6"></div>
<div class="a" style="left:276px;top:670px;width:1004px;height:16px;background:#58585a"></div>
<div class="t" style="left:726px;top:673px;font-size:8.5px;font-weight:bold;color:#fff">FEHLERLISTE</div>
<div class="a" style="left:276px;top:686px;width:1004px;height:23px;background:#f3f3f3"></div>
<div class="search" style="left:1153px;top:688px;width:113px;height:19px"><span>Suche</span></div>
<div class="a" style="left:277px;top:730.3px;width:1003px;height:1.6px;background:#9a9a9a"></div>
<div class="t" style="left:339.5px;top:718.4px;font-size:8.5px;font-weight:bold;color:#333">Code</div>
<div class="t" style="left:418px;top:718.4px;font-size:8.5px;font-weight:bold;color:#333">Beschreibung</div>
<div class="a" style="left:299px;top:710px;width:1px;height:21px;background:#999"></div>
<div class="a" style="left:330px;top:710px;width:1px;height:21px;background:#999"></div>
<div class="a" style="left:409px;top:710px;width:1px;height:21px;background:#999"></div>
<div class="a" style="left:801px;top:710px;width:1px;height:21px;background:#999"></div>

<!-- bottom tool bar -->
<div class="a" style="left:276px;top:860px;width:1004px;height:1px;background:#444"></div>
<div class="a" style="left:276px;top:861px;width:1004px;height:29px;background:#ececec"></div>


<!-- RIGHT PANEL -->
<div id="rp" class="a">
  <div class="ph" style="border-top-color:#55b6ea"><span>KOMPONENTEN</span></div>
  <div class="ptb">
    <div class="search" style="left:95px;top:2.3px;width:102px;height:19px;border-color:#5bb6bd;border-width:1.3px"><span>Suche</span></div>
  </div>
</div>
<svg class="a" style="left:1288.0px;top:134.0px;" width="8" height="6" viewBox="0 0 8 6"><path d="M0.8 1.2L4 4.4L7.2 1.2" stroke="#4a4a4a" stroke-width="1.8" fill="none"/></svg>
<svg class="a" style="left:1301.0px;top:132.0px;" width="12" height="10" viewBox="0 0 12 10"><path d="M0 0.5h4l1 1h7v8.5H0z" fill="#4a9cc9"/><path d="M0 3h12" stroke="#fff" stroke-width="0.8" opacity=".8"/></svg>
<div class="t" style="left:1315.80px;top:132.81px;font-size:8.7px;color:#3a3a3a;font-weight:bold;">Programmierung (370)</div>
<div class="a" style="left:1289px;top:154.5px;width:202px;height:1px;background:#e6e6e6"></div>
<div class="a" style="left:1285px;top:157px;width:197px;height:305px;overflow:hidden">
<div class="a" style="left:1.7px;top:43.5px;width:194px;height:14px;background:#ececec"></div>
<svg class="a" style="left:9.6px;top:5.2px;" width="8" height="6" viewBox="0 0 8 6"><path d="M0.8 1.2L4 4.4L7.2 1.2" stroke="#4a4a4a" stroke-width="1.8" fill="none"/></svg>
<svg class="a" style="left:21.0px;top:3.0px;" width="11" height="10" viewBox="0 0 11 10"><path d="M0 0h11v10H0z" fill="#4a9cc9"/><path d="M0 2h11" stroke="#fff" stroke-width="0.8"/><circle cx="3.3" cy="6" r="1.5" fill="none" stroke="#fff" stroke-width="1"/><path d="M4.8 6h4.5M8.3 5v2" stroke="#fff" stroke-width="1"/></svg>
<div class="t" style="left:34.70px;top:3.81px;font-size:8.7px;color:#3a3a3a;">Lokal (4)</div>
<svg class="a" style="left:36.0px;top:17.1px;" width="12" height="10" viewBox="0 0 12 10"><path d="M0 0.5h4l1 1h7v8.5H0z" fill="#4a9cc9"/><path d="M0 3h12" stroke="#fff" stroke-width="0.8" opacity=".8"/></svg>
<div class="t" style="left:49.70px;top:17.95px;font-size:8.7px;color:#3a3a3a;">Datentypen (0)</div>
<svg class="a" style="left:24.6px;top:33.5px;" width="8" height="6" viewBox="0 0 8 6"><path d="M0.8 1.2L4 4.4L7.2 1.2" stroke="#4a4a4a" stroke-width="1.8" fill="none"/></svg>
<svg class="a" style="left:36.0px;top:31.3px;" width="12" height="10" viewBox="0 0 12 10"><path d="M0 0.5h4l1 1h7v8.5H0z" fill="#4a9cc9"/><path d="M0 3h12" stroke="#fff" stroke-width="0.8" opacity=".8"/></svg>
<div class="t" style="left:49.70px;top:32.09px;font-size:8.7px;color:#3a3a3a;">Funktionen &amp; Funktionsbausteine (3)</div>
<svg class="a" style="left:51.0px;top:45.9px;" width="12" height="9" viewBox="0 0 12 9"><rect x="1.8" y="0.8" width="8.4" height="7.4" rx="1" fill="none" stroke="#4a9cc9" stroke-width="1.2"/><path d="M2 3h8" stroke="#4a9cc9" stroke-width="1"/><path d="M0 3h2M0 6.5h2M10 5h2" stroke="#4a9cc9" stroke-width="1"/></svg>
<div class="t" style="left:64.70px;top:46.23px;font-size:8.7px;color:#3a3a3a;">Sicherheitsblock</div>
<svg class="a" style="left:51.0px;top:60.1px;" width="12" height="9" viewBox="0 0 12 9"><rect x="1.8" y="0.8" width="8.4" height="7.4" rx="1" fill="none" stroke="#4a9cc9" stroke-width="1.2"/><path d="M2 3h8" stroke="#4a9cc9" stroke-width="1"/><path d="M0 3h2M0 6.5h2M10 5h2" stroke="#4a9cc9" stroke-width="1"/></svg>
<div class="t" style="left:64.70px;top:60.37px;font-size:8.7px;color:#3a3a3a;">TempMessung_Heizstab</div>
<svg class="a" style="left:51.0px;top:74.2px;" width="12" height="9" viewBox="0 0 12 9"><rect x="1.8" y="0.8" width="8.4" height="7.4" rx="1" fill="none" stroke="#4a9cc9" stroke-width="1.2"/><path d="M2 3h8" stroke="#4a9cc9" stroke-width="1"/><path d="M0 3h2M0 6.5h2M10 5h2" stroke="#4a9cc9" stroke-width="1"/></svg>
<div class="t" style="left:64.70px;top:74.51px;font-size:8.7px;color:#3a3a3a;">TempMessung_Platine</div>
<svg class="a" style="left:24.6px;top:90.0px;" width="8" height="6" viewBox="0 0 8 6"><path d="M0.8 1.2L4 4.4L7.2 1.2" stroke="#4a4a4a" stroke-width="1.8" fill="none"/></svg>
<svg class="a" style="left:36.0px;top:87.8px;" width="12" height="10" viewBox="0 0 12 10"><path d="M0 0.5h4l1 1h7v8.5H0z" fill="#4a9cc9"/><path d="M0 3h12" stroke="#fff" stroke-width="0.8" opacity=".8"/></svg>
<div class="t" style="left:49.70px;top:88.65px;font-size:8.7px;color:#3a3a3a;">Programme (1)</div>
<svg class="a" style="left:51.5px;top:101.5px;" width="11" height="11" viewBox="0 0 11 11"><rect x="0.6" y="0.6" width="9.8" height="9.8" fill="none" stroke="#4a9cc9" stroke-width="1.2"/><rect x="3" y="3" width="5" height="5" fill="none" stroke="#4a9cc9" stroke-width="1"/></svg>
<div class="t" style="left:64.70px;top:102.79px;font-size:8.7px;color:#3a3a3a;">Main</div>
<svg class="a" style="left:10.6px;top:116.6px;" width="7" height="9" viewBox="0 0 7 9"><path d="M1.4 1L4.8 4.5L1.4 8" stroke="#3a3a3a" stroke-width="2" fill="none"/></svg>
<svg class="a" style="left:22.5px;top:115.6px;" width="9" height="11" viewBox="0 0 9 11"><path d="M0 0h9v9.5H1.5v1.5H0z" fill="#4a9cc9"/><path d="M1.5 9.5h7.5v1.5H1.5z" fill="#9cc8e2"/></svg>
<div class="t" style="left:34.70px;top:116.93px;font-size:8.7px;color:#3a3a3a;">Extended (75)</div>
<svg class="a" style="left:9.6px;top:132.5px;" width="8" height="6" viewBox="0 0 8 6"><path d="M0.8 1.2L4 4.4L7.2 1.2" stroke="#4a4a4a" stroke-width="1.8" fill="none"/></svg>
<svg class="a" style="left:22.5px;top:129.8px;" width="9" height="11" viewBox="0 0 9 11"><path d="M0 0h9v9.5H1.5v1.5H0z" fill="#4a9cc9"/><path d="M1.5 9.5h7.5v1.5H1.5z" fill="#9cc8e2"/></svg>
<div class="t" style="left:34.70px;top:131.07px;font-size:8.7px;color:#3a3a3a;">IEC 61131-3 (134)</div>
<svg class="a" style="left:24.6px;top:146.6px;" width="8" height="6" viewBox="0 0 8 6"><path d="M0.8 1.2L4 4.4L7.2 1.2" stroke="#4a4a4a" stroke-width="1.8" fill="none"/></svg>
<svg class="a" style="left:36.0px;top:144.4px;" width="12" height="10" viewBox="0 0 12 10"><path d="M0 0.5h4l1 1h7v8.5H0z" fill="#4a9cc9"/><path d="M0 3h12" stroke="#fff" stroke-width="0.8" opacity=".8"/></svg>
<div class="t" style="left:49.70px;top:145.21px;font-size:8.7px;color:#3a3a3a;">Funktionen &amp; Funktionsbausteine (134)</div>
<svg class="a" style="left:39.6px;top:160.7px;" width="8" height="6" viewBox="0 0 8 6"><path d="M0.8 1.2L4 4.4L7.2 1.2" stroke="#4a4a4a" stroke-width="1.8" fill="none"/></svg>
<svg class="a" style="left:51.0px;top:158.5px;" width="12" height="10" viewBox="0 0 12 10"><path d="M0 0.5h4l1 1h7v8.5H0z" fill="#4a9cc9"/><path d="M0 3h12" stroke="#fff" stroke-width="0.8" opacity=".8"/></svg>
<div class="t" style="left:64.70px;top:159.35px;font-size:8.7px;color:#3a3a3a;">Arithmetische Funktionen (22)</div>
<svg class="a" style="left:66.0px;top:173.7px;" width="12" height="8" viewBox="0 0 12 8"><rect x="1.5" y="0" width="9" height="8" rx="1.2" fill="#4a9cc9"/><path d="M0 2h2M0 6h2M10 4h2" stroke="#4a9cc9" stroke-width="1"/></svg>
<div class="t" style="left:79.70px;top:173.49px;font-size:8.7px;color:#3a3a3a;">ADD</div>
<svg class="a" style="left:66.0px;top:187.8px;" width="12" height="8" viewBox="0 0 12 8"><rect x="1.5" y="0" width="9" height="8" rx="1.2" fill="#4a9cc9"/><path d="M0 2h2M0 6h2M10 4h2" stroke="#4a9cc9" stroke-width="1"/></svg>
<div class="t" style="left:79.70px;top:187.63px;font-size:8.7px;color:#3a3a3a;">ADD_LDT_LTIME</div>
<svg class="a" style="left:66.0px;top:202.0px;" width="12" height="8" viewBox="0 0 12 8"><rect x="1.5" y="0" width="9" height="8" rx="1.2" fill="#4a9cc9"/><path d="M0 2h2M0 6h2M10 4h2" stroke="#4a9cc9" stroke-width="1"/></svg>
<div class="t" style="left:79.70px;top:201.77px;font-size:8.7px;color:#3a3a3a;">ADD_LTIME</div>
<svg class="a" style="left:66.0px;top:216.1px;" width="12" height="8" viewBox="0 0 12 8"><rect x="1.5" y="0" width="9" height="8" rx="1.2" fill="#4a9cc9"/><path d="M0 2h2M0 6h2M10 4h2" stroke="#4a9cc9" stroke-width="1"/></svg>
<div class="t" style="left:79.70px;top:215.91px;font-size:8.7px;color:#3a3a3a;">ADD_LTOD_LTIME</div>
<svg class="a" style="left:66.0px;top:230.2px;" width="12" height="8" viewBox="0 0 12 8"><rect x="1.5" y="0" width="9" height="8" rx="1.2" fill="#4a9cc9"/><path d="M0 2h2M0 6h2M10 4h2" stroke="#4a9cc9" stroke-width="1"/></svg>
<div class="t" style="left:79.70px;top:230.05px;font-size:8.7px;color:#3a3a3a;">ADD_TIME</div>
<svg class="a" style="left:66.0px;top:244.4px;" width="12" height="8" viewBox="0 0 12 8"><rect x="1.5" y="0" width="9" height="8" rx="1.2" fill="#4a9cc9"/><path d="M0 2h2M0 6h2M10 4h2" stroke="#4a9cc9" stroke-width="1"/></svg>
<div class="t" style="left:79.70px;top:244.19px;font-size:8.7px;color:#3a3a3a;">DIV</div>
<svg class="a" style="left:66.0px;top:258.5px;" width="12" height="8" viewBox="0 0 12 8"><rect x="1.5" y="0" width="9" height="8" rx="1.2" fill="#4a9cc9"/><path d="M0 2h2M0 6h2M10 4h2" stroke="#4a9cc9" stroke-width="1"/></svg>
<div class="t" style="left:79.70px;top:258.33px;font-size:8.7px;color:#3a3a3a;">DIV_LTIME</div>
<svg class="a" style="left:66.0px;top:272.7px;" width="12" height="8" viewBox="0 0 12 8"><rect x="1.5" y="0" width="9" height="8" rx="1.2" fill="#4a9cc9"/><path d="M0 2h2M0 6h2M10 4h2" stroke="#4a9cc9" stroke-width="1"/></svg>
<div class="t" style="left:79.70px;top:272.47px;font-size:8.7px;color:#3a3a3a;">DIV_TIME</div>
<svg class="a" style="left:66.0px;top:286.8px;" width="12" height="8" viewBox="0 0 12 8"><rect x="1.5" y="0" width="9" height="8" rx="1.2" fill="#4a9cc9"/><path d="M0 2h2M0 6h2M10 4h2" stroke="#4a9cc9" stroke-width="1"/></svg>
<div class="t" style="left:79.70px;top:286.61px;font-size:8.7px;color:#3a3a3a;">EXPT</div>
<svg class="a" style="left:66.0px;top:300.9px;" width="12" height="8" viewBox="0 0 12 8"><rect x="1.5" y="0" width="9" height="8" rx="1.2" fill="#4a9cc9"/><path d="M0 2h2M0 6h2M10 4h2" stroke="#4a9cc9" stroke-width="1"/></svg>
<div class="t" style="left:79.70px;top:300.75px;font-size:8.7px;color:#3a3a3a;">MOD</div>
</div>
<svg class="a" style="left:1484.0px;top:158.5px;" width="10" height="7" viewBox="0 0 10 7"><path d="M1.2 5.2L5 1.8L8.8 5.2" stroke="#2a2a2a" stroke-width="2.1" fill="none"/></svg>
<div class="a" style="left:1487px;top:169px;width:4.5px;height:57px;background:#8a8a8a"></div>
<svg class="a" style="left:1484.0px;top:453.5px;" width="10" height="7" viewBox="0 0 10 7"><path d="M1.2 1.8L5 5.2L8.8 1.8" stroke="#2a2a2a" stroke-width="2.1" fill="none"/></svg>
<div class="a" style="left:1297px;top:466.5px;width:169px;height:4.5px;background:#8a8a8a"></div>
<svg class="a" style="left:1287.0px;top:464.0px;" width="7" height="10" viewBox="0 0 7 10"><path d="M5.2 1.2L1.8 5L5.2 8.8" stroke="#2a2a2a" stroke-width="2.1" fill="none"/></svg><svg class="a" style="left:1473.0px;top:464.0px;" width="7" height="10" viewBox="0 0 7 10"><path d="M1.8 1.2L5.2 5L1.8 8.8" stroke="#2a2a2a" stroke-width="2.1" fill="none"/></svg>
<div class="a" style="left:1483px;top:463px;width:12px;height:12px;background:#eeeeee"></div>
<div class="a" style="left:1285px;top:476px;width:210px;height:42px;background:#ebebeb;border-top:1.5px solid #777"></div>
<div class="a" style="left:1285px;top:497px;width:210px;height:1.5px;background:#777"></div>
<div class="a" style="left:1285px;top:518px;width:210px;height:1.5px;background:#777"></div>
<svg class="a" style="left:1289.0px;top:482.7px;" width="7" height="9" viewBox="0 0 7 9"><path d="M1.4 1L4.8 4.5L1.4 8" stroke="#3a3a3a" stroke-width="2" fill="none"/></svg><svg class="a" style="left:1301.0px;top:482.2px;" width="12" height="10" viewBox="0 0 12 10"><path d="M0 0.5h4l1 1h7v8.5H0z" fill="#4a9cc9"/><path d="M0 3h12" stroke="#fff" stroke-width="0.8" opacity=".8"/></svg><div class="t" style="left:1315.80px;top:483.01px;font-size:8.7px;color:#3a3a3a;font-weight:bold;">PLCnext Komponenten &amp; Programme (2)</div>
<svg class="a" style="left:1289.0px;top:503.8px;" width="7" height="9" viewBox="0 0 7 9"><path d="M1.4 1L4.8 4.5L1.4 8" stroke="#3a3a3a" stroke-width="2" fill="none"/></svg><svg class="a" style="left:1302.0px;top:502.5px;" width="11" height="12" viewBox="0 0 11 12"><path d="M3 0h8v8H3z" fill="#9cc8e2"/><path d="M0 2.5h8v9.5H0z" fill="#4a9cc9"/><path d="M1.5 6h5" stroke="#fff" stroke-width="1"/></svg><div class="t" style="left:1315.80px;top:504.11px;font-size:8.7px;color:#3a3a3a;font-weight:bold;">Netzwerk (505)</div>
<svg class="a" style="left:1288.0px;top:527.0px;" width="8" height="6" viewBox="0 0 8 6"><path d="M0.8 1.2L4 4.4L7.2 1.2" stroke="#4a4a4a" stroke-width="1.8" fill="none"/></svg><svg class="a" style="left:1300.5px;top:524.0px;" width="13" height="12" viewBox="0 0 13 12"><path d="M2 11L5 1L9 1L12 11z" fill="#4a9cc9"/><path d="M0 6h3M10 6h3M3 3h2M8 3h2" stroke="#4a9cc9" stroke-width="1"/><circle cx="6.5" cy="6" r="2" fill="#fff"/></svg><div class="t" style="left:1315.80px;top:525.81px;font-size:8.7px;color:#3a3a3a;font-weight:bold;">HMI (34)</div>
<div class="a" style="left:1289px;top:547px;width:202px;height:1px;background:#e6e6e6"></div>
<div class="a" style="left:1285px;top:549px;width:197px;height:318px;overflow:hidden">
<svg class="a" style="left:9.6px;top:5.9px;" width="8" height="6" viewBox="0 0 8 6"><path d="M0.8 1.2L4 4.4L7.2 1.2" stroke="#4a4a4a" stroke-width="1.8" fill="none"/></svg>
<svg class="a" style="left:21.0px;top:3.7px;" width="12" height="10" viewBox="0 0 12 10"><path d="M0 0.5h4l1 1h7v8.5H0z" fill="#4a9cc9"/><path d="M0 3h12" stroke="#fff" stroke-width="0.8" opacity=".8"/></svg>
<div class="t" style="left:34.70px;top:4.51px;font-size:8.7px;color:#3a3a3a;">Objekte (13)</div>
<svg class="a" style="left:36.5px;top:17.8px;" width="10" height="10" viewBox="0 0 10 10"><rect width="10" height="10" fill="#4a9cc9"/><path d="M2 5l2.2 2.5L8.3 2.3" stroke="#fff" stroke-width="1.5" fill="none"/></svg>
<div class="t" style="left:49.70px;top:18.65px;font-size:8.7px;color:#3a3a3a;">Checkbox</div>
<svg class="a" style="left:36.0px;top:32.0px;" width="12" height="10" viewBox="0 0 12 10"><rect x="0.5" y="0.5" width="11" height="9" fill="none" stroke="#4a9cc9" stroke-width="1"/><path d="M2 7.5L5 4.5L7 6L10 2.5" stroke="#4a9cc9" stroke-width="1.2" fill="none"/></svg>
<div class="t" style="left:49.70px;top:32.79px;font-size:8.7px;color:#3a3a3a;">Diagramm</div>
<svg class="a" style="left:36.0px;top:47.1px;" width="12" height="8" viewBox="0 0 12 8"><ellipse cx="6" cy="4" rx="5.8" ry="3.6" fill="#4a9cc9"/></svg>
<div class="t" style="left:49.70px;top:46.93px;font-size:8.7px;color:#3a3a3a;">Ellipse</div>
<svg class="a" style="left:38.0px;top:59.8px;" width="8" height="12" viewBox="0 0 8 12"><rect x="1" y="0" width="6" height="12" fill="#4a9cc9"/><path d="M3 2h2M3 5h2M3 8h2" stroke="#fff" stroke-width="1"/></svg>
<div class="t" style="left:49.70px;top:61.07px;font-size:8.7px;color:#3a3a3a;">Lineare Messskala</div>
<svg class="a" style="left:36.0px;top:78.4px;" width="12" height="2" viewBox="0 0 12 2"><rect width="12" height="1.5" fill="#4a9cc9"/></svg>
<div class="t" style="left:49.70px;top:75.21px;font-size:8.7px;color:#3a3a3a;">Linie</div>
<svg class="a" style="left:36.0px;top:88.5px;" width="12" height="10" viewBox="0 0 12 10"><path d="M1 1C2 5 2 9 3.5 9C5 9 5 1 6.5 1C8 1 8 9 9.5 9C10.5 9 11 5 11.5 1" stroke="#4a9cc9" stroke-width="1.4" fill="none"/></svg>
<div class="t" style="left:49.70px;top:89.35px;font-size:8.7px;color:#3a3a3a;">Polykurve</div>
<svg class="a" style="left:36.0px;top:103.7px;" width="12" height="8" viewBox="0 0 12 8"><path d="M0 1H5V7H12" stroke="#4a9cc9" stroke-width="1.4" fill="none"/></svg>
<div class="t" style="left:49.70px;top:103.49px;font-size:8.7px;color:#3a3a3a;">Polylinie</div>
<svg class="a" style="left:36.0px;top:116.3px;" width="12" height="12" viewBox="0 0 12 12"><circle cx="6" cy="6" r="5" fill="none" stroke="#4a9cc9" stroke-width="1.3"/><path d="M6 6L8.5 3.5M3 6h1.5" stroke="#4a9cc9" stroke-width="1.2"/></svg>
<div class="t" style="left:49.70px;top:117.63px;font-size:8.7px;color:#3a3a3a;">Radiale Messskala</div>
<svg class="a" style="left:36.0px;top:131.5px;" width="12" height="9" viewBox="0 0 12 9"><rect x="0.5" y="0.5" width="11" height="8" fill="none" stroke="#4a9cc9" stroke-width="1"/></svg>
<div class="t" style="left:49.70px;top:131.77px;font-size:8.7px;color:#3a3a3a;">Rechteck</div>
<svg class="a" style="left:36.0px;top:145.6px;" width="12" height="9" viewBox="0 0 12 9"><rect x="0" y="0" width="12" height="9" rx="2" fill="#4a9cc9"/><path d="M7 2v5.5l1.3-1.3L9.5 8l0.7-0.3L9 5.5h1.8z" fill="#fff"/></svg>
<div class="t" style="left:49.70px;top:145.91px;font-size:8.7px;color:#3a3a3a;">Schaltfl&auml;che</div>
<svg class="a" style="left:36.0px;top:158.2px;" width="12" height="12" viewBox="0 0 12 12"><rect x="0" y="8" width="12" height="4" fill="#4a9cc9"/><rect x="1.5" y="0.5" width="9" height="7.5" fill="none" stroke="#4a9cc9" stroke-width="1"/><path d="M3 2.5h1M5 2.5h4M3 4.5h1M5 4.5h4M3 6.5h1M5 6.5h4" stroke="#4a9cc9" stroke-width="0.8"/></svg>
<div class="t" style="left:49.70px;top:160.05px;font-size:8.7px;color:#3a3a3a;">Symbolliste</div>
<svg class="a" style="left:36.0px;top:172.9px;" width="11" height="11" viewBox="0 0 11 11"><path d="M0.8 11L5.5 0.5L10.2 11M2.7 7h5.6" stroke="#4a9cc9" stroke-width="1.4" fill="none"/></svg>
<div class="t" style="left:49.70px;top:174.19px;font-size:8.7px;color:#3a3a3a;">Text</div>
<svg class="a" style="left:36.0px;top:187.5px;" width="12" height="10" viewBox="0 0 12 10"><rect x="0.5" y="0.5" width="11" height="9" fill="none" stroke="#4a9cc9" stroke-width="1"/><path d="M3 2.5h3M3 7.5h3M4.5 2.5v5" stroke="#4a9cc9" stroke-width="1.2"/></svg>
<div class="t" style="left:49.70px;top:188.33px;font-size:8.7px;color:#3a3a3a;">Texteingabe</div>
<svg class="a" style="left:21.0px;top:201.7px;" width="11" height="10" viewBox="0 0 11 10"><path d="M0 0h11v10H0z" fill="#4a9cc9"/><path d="M0 2h11" stroke="#fff" stroke-width="0.8"/><circle cx="3.3" cy="6" r="1.5" fill="none" stroke="#fff" stroke-width="1"/><path d="M4.8 6h4.5M8.3 5v2" stroke="#fff" stroke-width="1"/></svg>
<div class="t" style="left:34.70px;top:202.47px;font-size:8.7px;color:#3a3a3a;">Lokal (0)</div>
<svg class="a" style="left:9.6px;top:218.0px;" width="8" height="6" viewBox="0 0 8 6"><path d="M0.8 1.2L4 4.4L7.2 1.2" stroke="#4a4a4a" stroke-width="1.8" fill="none"/></svg>
<svg class="a" style="left:22.5px;top:215.3px;" width="9" height="11" viewBox="0 0 9 11"><path d="M0 0h9v9.5H1.5v1.5H0z" fill="#4a9cc9"/><path d="M1.5 9.5h7.5v1.5H1.5z" fill="#9cc8e2"/></svg>
<div class="t" style="left:34.70px;top:216.61px;font-size:8.7px;color:#3a3a3a;">Default (21)</div>
<svg class="a" style="left:25.6px;top:230.4px;" width="7" height="9" viewBox="0 0 7 9"><path d="M1.4 1L4.8 4.5L1.4 8" stroke="#3a3a3a" stroke-width="2" fill="none"/></svg>
<svg class="a" style="left:36.0px;top:229.9px;" width="12" height="10" viewBox="0 0 12 10"><path d="M0 0.5h4l1 1h7v8.5H0z" fill="#4a9cc9"/><path d="M0 3h12" stroke="#fff" stroke-width="0.8" opacity=".8"/></svg>
<div class="t" style="left:49.70px;top:230.75px;font-size:8.7px;color:#3a3a3a;">Bilder (5)</div>
<svg class="a" style="left:25.6px;top:244.6px;" width="7" height="9" viewBox="0 0 7 9"><path d="M1.4 1L4.8 4.5L1.4 8" stroke="#3a3a3a" stroke-width="2" fill="none"/></svg>
<svg class="a" style="left:36.0px;top:244.1px;" width="12" height="10" viewBox="0 0 12 10"><path d="M0 0.5h4l1 1h7v8.5H0z" fill="#4a9cc9"/><path d="M0 3h12" stroke="#fff" stroke-width="0.8" opacity=".8"/></svg>
<div class="t" style="left:49.70px;top:244.89px;font-size:8.7px;color:#3a3a3a;">Seitenvorlagen (2)</div>
<svg class="a" style="left:24.6px;top:260.4px;" width="8" height="6" viewBox="0 0 8 6"><path d="M0.8 1.2L4 4.4L7.2 1.2" stroke="#4a4a4a" stroke-width="1.8" fill="none"/></svg>
<svg class="a" style="left:36.0px;top:258.2px;" width="12" height="10" viewBox="0 0 12 10"><path d="M0 0.5h4l1 1h7v8.5H0z" fill="#4a9cc9"/><path d="M0 3h12" stroke="#fff" stroke-width="0.8" opacity=".8"/></svg>
<div class="t" style="left:49.70px;top:259.03px;font-size:8.7px;color:#3a3a3a;">Symbole (14)</div>
<svg class="a" style="left:50.0px;top:273.4px;" width="13" height="8" viewBox="0 0 13 8"><rect x="0" y="0" width="13" height="8" rx="4" fill="#4a9cc9"/><circle cx="9" cy="4" r="2.5" fill="#fff"/></svg>
<div class="t" style="left:64.70px;top:273.17px;font-size:8.7px;color:#3a3a3a;">Bar Graph</div>
<svg class="a" style="left:50.0px;top:287.5px;" width="13" height="8" viewBox="0 0 13 8"><rect x="0" y="0" width="13" height="8" rx="4" fill="#4a9cc9"/><circle cx="9" cy="4" r="2.5" fill="#fff"/></svg>
<div class="t" style="left:64.70px;top:287.31px;font-size:8.7px;color:#3a3a3a;">Bar Graph Horizontal</div>
<svg class="a" style="left:50.0px;top:301.6px;" width="13" height="8" viewBox="0 0 13 8"><rect x="0" y="0" width="13" height="8" rx="4" fill="#4a9cc9"/><circle cx="9" cy="4" r="2.5" fill="#fff"/></svg>
<div class="t" style="left:64.70px;top:301.45px;font-size:8.7px;color:#3a3a3a;">Horizontal Gauge</div>
<svg class="a" style="left:50.0px;top:315.8px;" width="13" height="8" viewBox="0 0 13 8"><rect x="0" y="0" width="13" height="8" rx="4" fill="#4a9cc9"/><circle cx="9" cy="4" r="2.5" fill="#fff"/></svg>
<div class="t" style="left:64.70px;top:315.59px;font-size:8.7px;color:#3a3a3a;">Horizontal Bar</div>
</div>
<svg class="a" style="left:1484.0px;top:549.5px;" width="10" height="7" viewBox="0 0 10 7"><path d="M1.2 5.2L5 1.8L8.8 5.2" stroke="#2a2a2a" stroke-width="2.1" fill="none"/></svg>
<div class="a" style="left:1487px;top:561.5px;width:4.5px;height:196px;background:#8a8a8a"></div>
<svg class="a" style="left:1484.0px;top:858.0px;" width="10" height="7" viewBox="0 0 10 7"><path d="M1.2 1.8L5 5.2L8.8 1.8" stroke="#2a2a2a" stroke-width="2.1" fill="none"/></svg>
<div class="a" style="left:1285px;top:868px;width:210px;height:22px;background:#ebebeb;border-top:2px solid #9a9a9a"></div>
<svg class="a" style="left:1289.0px;top:875.2px;" width="7" height="9" viewBox="0 0 7 9"><path d="M1.4 1L4.8 4.5L1.4 8" stroke="#3a3a3a" stroke-width="2" fill="none"/></svg><svg class="a" style="left:1302.0px;top:873.5px;" width="11" height="12" viewBox="0 0 11 12"><path d="M0 0h8v12H0z" fill="#4a9cc9"/><path d="M1.5 2.5h5" stroke="#fff" stroke-width="1"/><circle cx="8" cy="8.5" r="2.8" fill="#fff"/><circle cx="8" cy="8.5" r="2" fill="none" stroke="#4a9cc9" stroke-width="1.3"/></svg><div class="t" style="left:1315.90px;top:875.51px;font-size:8.7px;color:#3a3a3a;font-weight:bold;">Bibliotheken (2)</div>

<!-- STATUS BAR -->
<div class="a" style="left:0;top:890px;width:1500px;height:18px;background:#3f3f41"></div>

<!-- TASKBAR -->
<div class="a" style="left:0;top:908px;width:1500px;height:32px;background:linear-gradient(90deg,#1d3b44 0%,#1e3640 40%,#1b2a3e 75%,#1a263f 100%)"></div>
<!-- panel toolbar icons (left & right) -->
<svg class="a" style="left:0;top:100px" width="1500" height="28" viewBox="0 100 1500 28">
  <defs>
    <g id="pexp"><path d="M0 0h4.2L0 4.2zM11.3 0h-4.2L11.3 4.2zM0 11.2h4.2L0 7zM11.3 11.2h-4.2L11.3 7z" fill="#4a4a4a"/><path d="M1.5 1.5l3.5 3.5M9.8 1.5l-3.5 3.5M1.5 9.7l3.5-3.5M9.8 9.7l-3.5-3.5" stroke="#4a4a4a" stroke-width="1.2"/></g>
    <g id="pcol"><path d="M4.8 4.8h-4L4.8 0.8zM6.7 4.8h4L6.7 0.8zM4.8 6.7h-4L4.8 10.7zM6.7 6.7h4L6.7 10.7z" fill="#4a4a4a"/><path d="M0.3 0.3l3.5 3.5M11.2 0.3l-3.5 3.5M0.3 11.2l3.5-3.5M11.2 11.2l-3.5-3.5" stroke="#4a4a4a" stroke-width="1.2"/></g>
    <g id="pswp"><path d="M0 3l3.2-2.6v5.2z" fill="#4a4a4a"/><path d="M3 3h7.5" stroke="#888" stroke-width="1.3"/><path d="M10.8 8.6L7.6 6v5.2z" fill="#4a4a4a"/><path d="M1.5 8.6h6.5" stroke="#4a4a4a" stroke-width="1.3"/></g>
    <g id="srch"><path d="M0 0h9.5l-3.3 3.6v4.5l-2.9-1.4V3.6z" fill="#555"/><circle cx="2.3" cy="6" r="2.2" fill="#fff" stroke="#179aa5" stroke-width="1.3"/><path d="M3.8 7.6l1.8 1.8" stroke="#179aa5" stroke-width="1.5"/></g>
    <path id="ddarr" d="M0 0h5l-2.5 1.6z" fill="#c4c4c4"/>
  </defs>
  <use href="#pexp" x="6" y="108.2"/><use href="#pcol" x="24.7" y="108.2"/><use href="#pswp" x="44" y="108"/>
  <use href="#ddarr" x="65.5" y="120"/><use href="#ddarr" x="264.5" y="119.5"/>
  <use href="#srch" x="241.3" y="108.9"/>
  <use href="#pexp" x="1293.9" y="108.2"/><use href="#pcol" x="1312.8" y="108.2"/><use href="#pswp" x="1332" y="108"/>
  <use href="#ddarr" x="1353.5" y="120"/><use href="#ddarr" x="1488.5" y="119.5"/>
  <use href="#srch" x="1464" y="109"/>
  <rect x="1285" y="125" width="210" height="2" fill="#a9a9a9"/>
</svg>

<!-- sub tab icons -->
<svg class="a" style="left:276px;top:104px" width="350" height="26" viewBox="276 104 350 26">
  <g stroke="#3c9bcb" stroke-width="1.1" fill="none">
    <path d="M286.2 111.8h6l2.8 2.8v7.3h-8.8z"/><path d="M288 115.5h5.5M288 117.5h5.5M288 119.5h5.5M290.3 114v7" stroke-width="0.8"/>
    <path d="M355.8 111.8h6l2.8 2.8v7.3h-8.8z"/><path d="M358.8 115l-1.8 2.5 1.8 2.5M361.5 115l1.8 2.5-1.8 2.5M360.2 114v7" stroke-width="1"/>
    <path d="M425.8 113.3h9v9.5h-9z"/><path d="M428 113.3l2.8-2 2.8 2" />
    <path d="M537 116.5h4v4.5h-2l-1 1.5v-1.5h-1z"/><path d="M541 112.3h5v5h-2.2l-0.8 1.4v-1.4H541z"/>
  </g>
  <path d="M608 117.7h6.5M611.25 114.5v6.5" stroke="#333" stroke-width="1.6"/>
</svg>

<!-- sub-tab bar right controls -->
<svg class="a" style="left:1240px;top:108px" width="40" height="18" viewBox="1240 108 40 18">
  <path d="M1248 115.5l3.2 3 3.2-3" stroke="#333" stroke-width="1.5" fill="none"/>
  <rect x="1263.2" y="113.6" width="7.5" height="7" fill="none" stroke="#333" stroke-width="1.2"/><path d="M1263.2 114.8h7.5" stroke="#333" stroke-width="1.5"/>
</svg>

<!-- code title controls -->
<svg class="a" style="left:1210px;top:134px" width="70" height="16" viewBox="1210 134 70 16">
  <path d="M1216.5 142h3M1219.5 139.5v5l3.2-2.5zM1222.7 139.5v5" stroke="#333" stroke-width="1" fill="#333"/>
  <path d="M1233 143.5h6" stroke="#333" stroke-width="1.3"/>
  <rect x="1248.9" y="139.4" width="5.8" height="5.5" fill="none" stroke="#333" stroke-width="1"/><path d="M1248.9 140.1h5.8" stroke="#333" stroke-width="1.3"/>
  <path d="M1264 139l6 6M1270 139l-6 6" stroke="#333" stroke-width="1.2"/>
</svg>

<!-- code toolbar -->
<svg class="a" style="left:276px;top:150px" width="510" height="25" viewBox="276 150 510 25">
  <rect x="284.5" y="157.5" width="10" height="10" fill="none" stroke="#444" stroke-width="0.9" stroke-dasharray="1.2 1"/>
  <path d="M289.5 159.5v6M286.5 162.5h6" stroke="#333" stroke-width="1.4"/>
  <path d="M292 169l4.5-4.5" stroke="#1a9aa6" stroke-width="2.2"/>
  <path d="M303.5 160.3V166.7M305.5 160.3V166.7M303.5 163.5H305.5M307.3 160.3V166.7M310.6 160.3L307.8 163.5L310.6 166.7M312.4 160.3L315.2 163.5L312.4 166.7M315.8 160.3V166.7" stroke="#555" stroke-width="1.2" fill="none"/>
  <path d="M323.2 160.5h9M323.2 162.5h9M323.2 164.5h7M323.2 166.5h9" stroke="#555" stroke-width="1.1"/>
  <rect x="342.5" y="158" width="11" height="11" fill="#f0f0f0" stroke="#ddd" stroke-width="0.8"/><path d="M344.5 160.5h7M344.5 162.5h7M344.5 164.5h5M344.5 166.5h7" stroke="#ccc" stroke-width="1"/>
  <g stroke="#444" stroke-width="1.2" fill="none">
    <path d="M362 160.5l-2.3 2.5 2.3 2.5M369.7 160.5l2.3 2.5-2.3 2.5M363.5 163h4.5"/>
    <path d="M378.5 160.5l2.3 2.5-2.3 2.5M388.5 160.5l2.3 2.5-2.3 2.5M382 163h4.5"/>
    <path d="M397.7 160.5l2.3 2.5-2.3 2.5M400.5 160.5l2.3 2.5-2.3 2.5M404.5 163h4.5"/>
  </g>
  <path d="M416.8 163h6" stroke="#444" stroke-width="1.6"/><path d="M425.5 160.5h1.8v1.8h-1.8zM425.5 164h1.8v1.8h-1.8z" fill="#444"/>
  <path d="M438.5 157.5v12M438.5 163h4.5" stroke="#444" stroke-width="1.6"/>
  <path d="M461.5 157.5v12M457.5 163h4" stroke="#444" stroke-width="1.6"/>
  <path d="M476.5 157.5v12M480.5 157.5v12M473 163h3.5M480.5 163h3.5" stroke="#444" stroke-width="1.6"/>
  <path d="M495.5 157.5v12M499.5 157.5v12M492.8 163h9.6M493 160h9M493 166h9" stroke="#d4d4d4" stroke-width="1.2"/>
  <path d="M514 160.5l-2.5 2.5 2.5 2.5M519 160.5l2.5 2.5-2.5 2.5" stroke="#444" stroke-width="1.3" fill="none"/>
  <path d="M532 160.5l-2.5 2.5 2.5 2.5M538.5 160.5l2.5 2.5-2.5 2.5M535.2 159.5v4M535.2 165v1" stroke="#d0d0d0" stroke-width="1.2" fill="none"/>
  <path d="M550.8 154v18.5M638.3 154v18.5M744 154v18.5" stroke="#dcdcdc" stroke-width="1"/>
  <g stroke="#444" stroke-width="1.5" fill="none">
    <path d="M563 161l3.2-3.3 3.2 3.3M563 165.5l3.2 3.3 3.2-3.3"/>
    <path d="M582.5 160.3l-3 2.8 3 2.8M587.5 160.3l3 2.8-3 2.8"/>
    <path d="M601.5 157.5l3 3 3-3M601.5 169l3-3 3 3"/>
    <path d="M617 160.3l3 2.8-3 2.8M628.5 160.3l-3 2.8 3 2.8"/>
  </g>
  <text x="648" y="166" font-family="Liberation Sans" font-size="6.5" fill="#666">1..2</text>
  <rect x="663.7" y="155" width="17.1" height="16.7" fill="#76c7cc"/>
  <rect x="682.5" y="155" width="17.2" height="16.7" fill="#76c7cc"/>
  <rect x="720" y="155" width="17.5" height="16.7" fill="#76c7cc"/>
  <rect x="667.5" y="158.5" width="9" height="8" fill="none" stroke="#3c3c3c" stroke-width="1.2"/>
  <path d="M665.5 157.5l2 1M678.5 157.5l-2 1M667.5 166.5v2" stroke="#3c3c3c" stroke-width="0.7"/>
  <path d="M686 160h10M686 162.5h10M686 165h10M686 167.5h10M688 158v11.5M690.5 158v11.5M693 158v11.5" stroke="#3c3c3c" stroke-width="0.8"/>
  <circle cx="705.5" cy="163.5" r="1.5" fill="#333"/><circle cx="714.2" cy="163.5" r="1.5" fill="#333"/><path d="M705.5 163.5h8.7" stroke="#333" stroke-width="0.9"/>
  <path d="M725 158l4-2.5 7 6.5-4 4z" fill="none" stroke="#3c3c3c" stroke-width="1"/><path d="M723.5 162.5l3-2.5 3 3-3 3z" fill="none" stroke="#3c3c3c" stroke-width="1"/><path d="M726 166l2.5 2.5" stroke="#3c3c3c" stroke-width="1.3"/>
  <circle cx="761.5" cy="161.2" r="3.6" fill="none" stroke="#333" stroke-width="1.3"/><path d="M758.8 163.8l-4 4.2" stroke="#333" stroke-width="2"/>
  <path d="M776 169.5h4l-2 1.3z" fill="#bbb"/>
</svg>

<!-- diagram extras -->
<svg class="a" style="left:366px;top:220px" width="20" height="20" viewBox="366 220 20 20">
  <path d="M376 224l-2 2h4zM376 236l-2-2h4zM370 230l2-2v4zM382 230l-2-2v4z" fill="#8a8a8a"/>
  <path d="M376 226.5v7M373 230h6" stroke="#9a9a9a" stroke-width="1" stroke-dasharray="1.2 0.8"/>
</svg>
<svg class="a" style="left:1080px;top:376px" width="95" height="42" viewBox="1080 376 95 42">
  <rect x="1086" y="376.4" width="88" height="19.3" fill="#fff"/>
  <path d="M1091.8 381.5V389.5M1094.3 381.5V389.5M1091.8 385.5H1094.3M1096.6 381.5V389.5M1101 381.5L1097.2 385.5L1101 389.5M1103.8 381.5L1107.6 385.5L1103.8 389.5M1108.6 381.5V389.5" stroke="#666" stroke-width="1.5" fill="none"/>
  <path d="M1114.5 382h8M1114.5 384.2h11M1114.5 386.4h8M1114.5 388.6h11M1114.5 390.8h6" stroke="#666" stroke-width="1.8"/>
  <path d="M1137 383.5l3.8-4 3.8 4M1137 388.5l3.8 4 3.8-4" stroke="#666" stroke-width="2.6" fill="none"/>
  <path d="M1157.5 382.3l-4 3.9 4 3.9M1164.5 382.3l4 3.9-4 3.9" stroke="#666" stroke-width="2.6" fill="none"/>
  <rect x="1084" y="400.2" width="19.6" height="13.8" fill="#fff" stroke="#67c0c6" stroke-width="1.3"/>
</svg>
<svg class="a" style="left:1145px;top:598px" width="125" height="52" viewBox="1145 598 125 52">
  <rect x="1149" y="615" width="118" height="33" fill="#eef0f0" opacity=".85"/>
  <rect x="1207" y="619" width="60" height="29" fill="#cfe6e9"/>
  <g stroke="#9fb3b6" stroke-width="0.7" fill="none">
    <path d="M1218 624.5h40M1215 629v16h8M1228 627v11h20v-14M1221 643h40"/>
  </g>
  <g fill="#b7c6c8"><rect x="1216" y="623" width="5" height="3"/><rect x="1229" y="622.5" width="5" height="3"/><rect x="1248" y="622.5" width="5" height="3"/><rect x="1224" y="638" width="5" height="3"/><rect x="1236" y="638" width="5" height="3"/><rect x="1232" y="628" width="3" height="3"/><rect x="1252" y="627" width="3" height="3"/></g>
  <path d="M1248.5 604.5l4.5 4.5M1253 604.5l-4.5 4.5" stroke="#d9534f" stroke-width="1.4"/>
  <path d="M1255.5 604l3-3 5 5-3 3zM1261 608.5l2.5-2.5 3 3-2.5 2.5z" fill="#fff" stroke="#777" stroke-width="0.9"/><path d="M1256.5 608.5l1.5 3" stroke="#999" stroke-width="0.8"/>
</svg>

<!-- code scrollbars -->
<div class="a" style="left:1271.7px;top:231.7px;width:4.5px;height:355px;background:#8a8a8a"></div>
<div class="a" style="left:743px;top:655px;width:475px;height:5px;background:#8a8a8a"></div>
<div class="a" style="left:1268px;top:651px;width:12px;height:12px;background:#efefef"></div>
<svg class="a" style="left:276px;top:170px" width="1004" height="495" viewBox="276 170 1004 495">
  <path d="M1270.2 184.2l3.8-3.5 3.8 3.5" stroke="#2a2a2a" stroke-width="2.1" fill="none"/>
  <path d="M1270.2 643.3l3.8 3.5 3.8-3.5" stroke="#2a2a2a" stroke-width="2.1" fill="none"/>
  <path d="M284.5 653.5l-3.3 3.7 3.3 3.7" stroke="#2a2a2a" stroke-width="2.1" fill="none"/>
  <path d="M1259.2 653.5l3.3 3.7-3.3 3.7" stroke="#2a2a2a" stroke-width="2.1" fill="none"/>
</svg>

<!-- fehlerliste details -->
<svg class="a" style="left:1230px;top:670px" width="50" height="16" viewBox="1230 670 50 16">
  <path d="M1238.5 677.5h3M1241.5 675v5l3-2.5zM1244.5 675v5" stroke="#eee" stroke-width="1" fill="#eee"/>
  <path d="M1253.5 681l5-5M1255 676h3.5v3.5" stroke="#eee" stroke-width="1.1" fill="none"/>
  <path d="M1268 674.5l5.5 5.5M1273.5 674.5l-5.5 5.5" stroke="#eee" stroke-width="1.2"/>
</svg>
<svg class="a" style="left:1130px;top:686px" width="150" height="24" viewBox="1130 686 150 24">
  <path d="M1136.5 692.5h9l-3.3 3.8v4.7l-2.4-1.2v-3.5z" fill="#444"/>
  <use href="#srch" x="1246.5" y="692.5"/>
  <path d="M1272.5 701.5h4l-2 1.3z" fill="#ccc"/>
</svg>
<svg class="a" style="left:280px;top:712px" width="16" height="16" viewBox="280 712 16 16">
  <path d="M282.5 714.5h8l-2.7 3v3.5l-2.6-1.2v-2.3z" fill="#d0d0d0"/><circle cx="290.5" cy="720" r="2.8" fill="#fff" stroke="#d0d0d0" stroke-width="1"/>
</svg>

<!-- status bar -->
<div class="t" style="left:1149px;top:894.9px;font-size:8.6px;color:#fff">0 Fehler, 0 Warnungen</div>
<div class="a" style="left:1253px;top:891.5px;width:23px;height:14px;background:#f3f3f3"></div>
<div class="a" style="left:1280px;top:891.5px;width:23px;height:14px;background:#f3f3f3"></div>
<svg class="a" style="left:1253px;top:891px" width="247" height="17" viewBox="1253 891 247 17">
  <circle cx="1264.5" cy="897.3" r="3.3" fill="#e6f5f6" stroke="#1f9aa6" stroke-width="1.4"/><path d="M1266.8 899.7l3 3" stroke="#444" stroke-width="1.8"/>
  <circle cx="1291.5" cy="898.5" r="2.3" fill="#5cc6cf"/><path d="M1286 896v-2.3h2.3M1297 896v-2.3h-2.3M1286 901v2.3h2.3M1297 901v2.3h-2.3" stroke="#555" stroke-width="1.2" fill="none"/>
  <text x="1307" y="901.5" font-family="Liberation Sans" font-size="8.5" fill="#fff">100%</text>
  <path d="M1335 899h5.5" stroke="#fff" stroke-width="1.4"/>
  <rect x="1348" y="897" width="102" height="3.8" fill="#fff"/>
  <rect x="1396.5" y="893.3" width="3" height="11" fill="#3f3f41" stroke="#fff" stroke-width="1.2"/>
  <path d="M1454 899h7M1457.5 895.5v7" stroke="#fff" stroke-width="1.4"/>
  <circle cx="1487.5" cy="896.3" r="3.2" fill="#8a8a8a"/><path d="M1483 906l1.2-4.5h6.6l1.2 4.5z" fill="#8a8a8a"/><path d="M1485 893.5l5 5M1490 893.5l-5 5" stroke="#3f3f41" stroke-width="0.6"/>
</svg>

<!-- bottom toolbar icons -->
<div class="a" style="left:277px;top:863px;width:24px;height:25px;background:#76c7cc"></div>
<svg class="a" style="left:276px;top:861px" width="360" height="29" viewBox="276 861 360 29">
  <defs><g id="bwin"><rect x="0.5" y="0.5" width="15" height="13" fill="#fff" stroke="#555" stroke-width="1"/><path d="M0.5 2h15" stroke="#555" stroke-width="1.6"/></g></defs>
  <use href="#bwin" x="281" y="868.5"/><path d="M284 873.5h1.5M287 873.5h7M284 876h1.5M287 876h7M284 878.5h1.5M287 878.5h7" stroke="#555" stroke-width="1"/>
  <use href="#bwin" x="310.5" y="868.5"/><circle cx="318.5" cy="876.5" r="3.3" fill="none" stroke="#555" stroke-width="1.2"/><path d="M320.8 879l3 3.2" stroke="#555" stroke-width="1.5"/>
  <use href="#bwin" x="339.5" y="868.5"/><circle cx="343" cy="876" r="1.3" fill="none" stroke="#555"/><circle cx="351.5" cy="873" r="1.3" fill="none" stroke="#555"/><circle cx="351.5" cy="879" r="1.3" fill="none" stroke="#555"/><path d="M344 875.5l6.5-2.5M344 876.5l6.5 2.5" stroke="#555" stroke-width="0.8"/>
  <use href="#bwin" x="368.5" y="868.5"/><rect x="371" y="872" width="4" height="3" fill="none" stroke="#555" stroke-width="0.8"/><rect x="377" y="876" width="5" height="4" fill="none" stroke="#1a9aa6" stroke-width="1"/>
  <use href="#bwin" x="397.5" y="868.5"/><path d="M400 874h3.5v2.5H400zM406 874h3.5v2.5H406zM403.5 874.5h2.5" stroke="#555" stroke-width="0.9" fill="none"/>
  <use href="#bwin" x="426.5" y="868.5"/><path d="M429 878.5l3-4 2.5 2.5 3.5-4.5 2.5 2.5" stroke="#555" stroke-width="1" fill="none"/>
  <use href="#bwin" x="455.5" y="868.5"/><rect x="459.5" y="875" width="8" height="4.5" fill="#555"/><rect x="461.5" y="872.5" width="4" height="2.5" fill="#555"/>
  <use href="#bwin" x="484.5" y="868.5"/><circle cx="488" cy="881.5" r="4.2" fill="#555"/>
  <use href="#bwin" x="513.5" y="868.5"/><path d="M516 873.5h8M516 876h6" stroke="#555" stroke-width="0.9"/><path d="M522 881.5c2 0 4-2 4-4" stroke="#1a9aa6" stroke-width="1.8" fill="none"/>
  <use href="#bwin" x="542.5" y="868.5"/><rect x="546" y="874" width="9" height="4.2" rx="2.1" fill="#555"/><circle cx="552.5" cy="876.1" r="1.4" fill="#fff"/>
  <use href="#bwin" x="571.5" y="868.5"/><text x="573.3" y="879.5" font-family="Liberation Sans" font-size="6.5" font-weight="bold" fill="#555" textLength="11.5" lengthAdjust="spacingAndGlyphs">LOG</text>
  <use href="#bwin" x="600.5" y="868.5"/><path d="M599.5 876.5h6l-1 7.5h-4z" fill="#555"/><path d="M599 875.5h7" stroke="#555" stroke-width="1.2"/>
  <path d="M609.5 865h8v5.5h-8z" fill="#8a3aa8"/><path d="M609.5 865l4 3 4-3" stroke="#fff" stroke-width="0.8" fill="none"/><circle cx="619" cy="870.5" r="1.6" fill="#fff" stroke="#8a3aa8" stroke-width="1"/>
</svg>

<!-- TASKBAR -->
<div class="a" style="left:0;top:908px;width:30px;height:32px;background:#1c3a44"></div>
<svg class="a" style="left:0;top:908px" width="30" height="32" viewBox="0 908 30 32">
  <path d="M4.3 917.5l5.5-0.8v5.5H4.3zM10.8 916.6l6.7-0.9v6.5h-6.7zM4.3 923.2h5.5v5.5l-5.5-0.8zM10.8 923.2h6.7v6.5l-6.7-0.9z" fill="#fff"/>
</svg>
<div class="a" style="left:30px;top:908px;width:270px;height:32px;background:#f0f0f0"></div>
<svg class="a" style="left:30px;top:908px" width="30" height="32" viewBox="30 908 30 32">
  <circle cx="47.3" cy="921.8" r="3.9" fill="none" stroke="#333" stroke-width="1.1"/><path d="M44.5 924.7l-4.8 4.8" stroke="#333" stroke-width="1.2"/>
</svg>
<div class="t" style="left:61.3px;top:919.6px;font-size:11.7px;color:#3a3a3a">Suchbegriff hier eingeben</div>
<svg class="a" style="left:300px;top:908px" width="300" height="32" viewBox="300 908 300 32">
  <path d="M312.5 919.5h3v1h-2v6h2v1h-3zM324 919.5h-3v1h2v6h-2v1h3z" fill="#fff"/><path d="M316.5 920h4.5v7h-4.5z" fill="none" stroke="#fff" stroke-width="0.9"/>
  <path d="M351.5 923.5c0-5 4-8 8-8 4 0 7 2.5 7 7h-11c0.5 4 5 5.5 10 3v3.5c-6 3-14 1-14-5.5z" fill="#1e8fe6"/><path d="M356 921.2h6.5c-0.3-2.3-1.7-3.3-3.3-3.3s-3 1-3.2 3.3z" fill="#1b3340"/>
  <path d="M388 917.5h6l1.5 1.5h9v11.5H388z" fill="#f6c038"/><path d="M388 921h16.5v9.5H388z" fill="#ffd866"/><path d="M393 925h7v5.5h-7z" fill="#2a7fd4"/>
  <path d="M427 918.5h16v12.5h-16z" fill="#f3f3f3"/><path d="M431.5 918.5v-1.8a3.5 2.7 0 0 1 7 0v1.8" stroke="#f3f3f3" stroke-width="1.3" fill="none"/>
  <rect x="431.5" y="922.5" width="3" height="3" fill="#f25022"/><rect x="435.5" y="922.5" width="3" height="3" fill="#7fba00"/><rect x="431.5" y="926.5" width="3" height="3" fill="#00a4ef"/><rect x="435.5" y="926.5" width="3" height="3" fill="#ffb900"/>
  <path d="M465 920l9.5-5.5 9.5 5.5v10.5h-19z" fill="#0f6cbd"/><path d="M465 921l9.5 5 9.5-5v9.5h-19z" fill="#4fb2f2"/><path d="M465 930.5l9.5-5.5 9.5 5.5z" fill="#8dd0f6"/>
  <circle cx="512" cy="924.5" r="8" fill="#ff7139"/><circle cx="512" cy="925" r="5" fill="#5b2fc5"/><path d="M505 921c1-5 6-8 10.5-6.5-2.5 0-4 1.5-4.5 3 3 0 5.5 1.5 6.5 4" fill="#ffbd2e"/>
  <path d="M537.5 908h32v32h-32z" fill="#4b5b63"/><path d="M537.5 938.5h32v1.5h-32z" fill="#76b9ed"/>
  <path d="M542.5 914.5h21.5v20h-21.5z" fill="#8dbb25"/>
  <path d="M546.5 918l5.5 6.5-5.5 7M559.5 918l-5.5 6.5 5.5 7" stroke="#fff" stroke-width="2.6" fill="none"/><path d="M544 916h2v2h-2zM560 916h2v2h-2zM544 931h2v2h-2zM560 931h2v2h-2z" fill="#fff"/>
</svg>
<svg class="a" style="left:1340px;top:908px" width="160" height="32" viewBox="1340 908 160 32">
  <path d="M1353.5 927.5l5-5 5 5" stroke="#fff" stroke-width="1.3" fill="none"/>
  <rect x="1373.5" y="918.5" width="10" height="7" fill="none" stroke="#fff" stroke-width="1"/><path d="M1378.5 925.5v3M1375 929h7M1371 922h2.5M1371 922v8h5" stroke="#fff" stroke-width="1" fill="none"/>
  <path d="M1391.5 922h2.5l3.5-3v12l-3.5-3h-2.5z" fill="none" stroke="#fff" stroke-width="1"/><path d="M1399.5 921.5c1.2 1.5 1.2 5 0 6.5M1401.8 919.5c2.2 2.5 2.2 8.5 0 11" stroke="#fff" stroke-width="1" fill="none"/>
  <path d="M1470 917.5h13v9h-8l-3 3v-3h-2z" fill="none" stroke="#fff" stroke-width="1.2"/><path d="M1472.5 920.5h8M1472.5 923h8" stroke="#fff" stroke-width="0.9"/>
  <circle cx="1484.5" cy="929" r="5" fill="#1b3340" stroke="#fff" stroke-width="1"/>
  <text x="1484.5" y="932.2" font-family="Liberation Sans" font-size="8" fill="#fff" text-anchor="middle">1</text>
</svg>
<div class="t" style="left:1412px;top:912.5px;font-size:9.2px;color:#fff;width:40px;text-align:center">15:14</div>
<div class="t" style="left:1411.5px;top:926.5px;font-size:8.9px;color:#fff">06.01.2022</div>



</body></html>
